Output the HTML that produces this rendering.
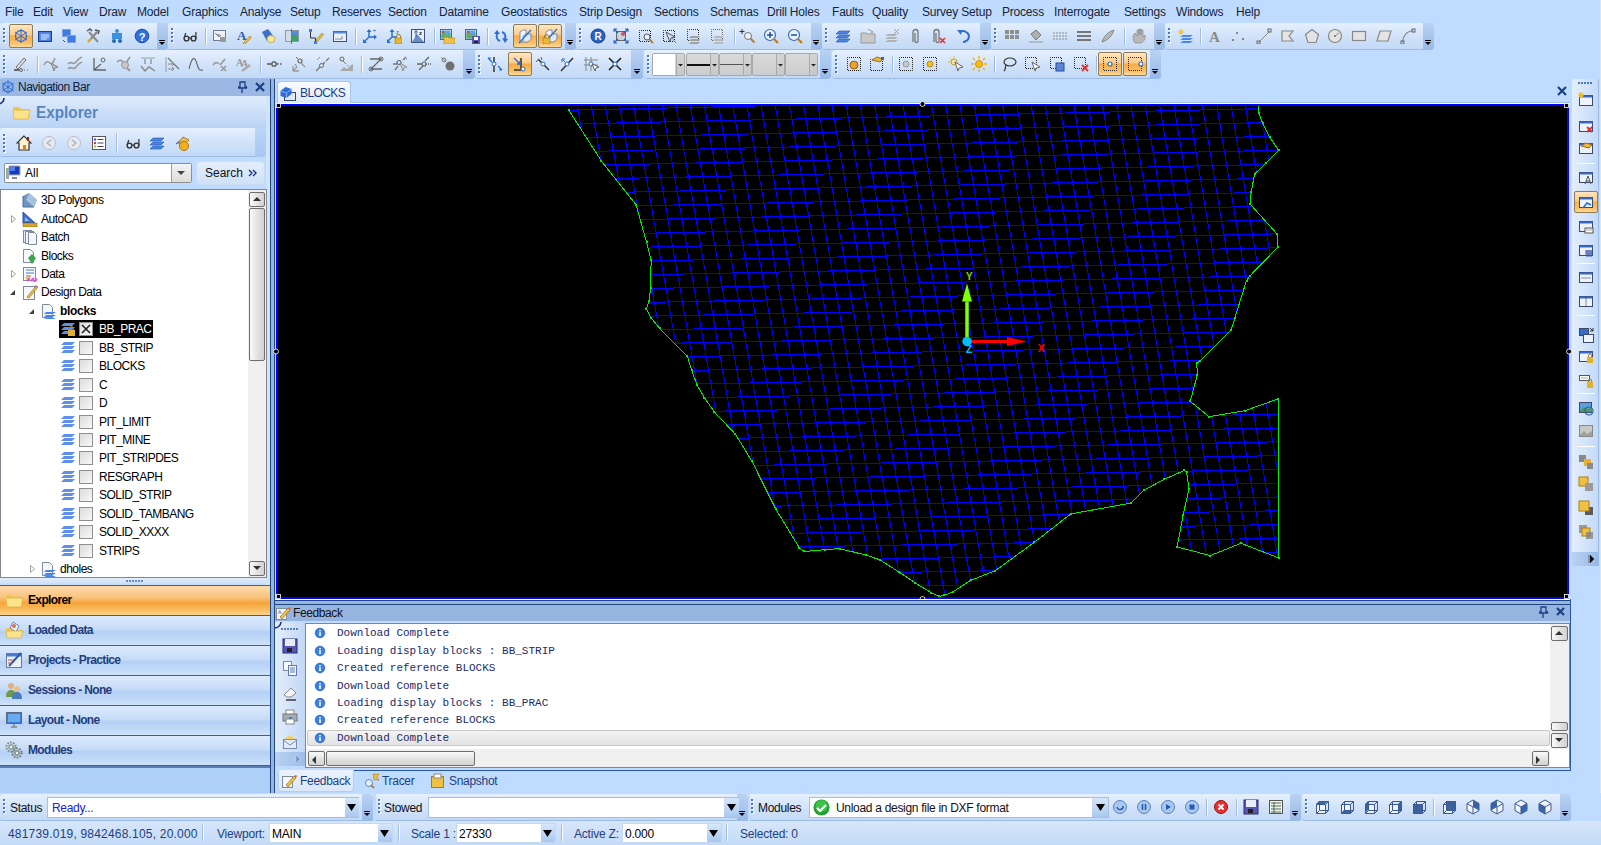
<!DOCTYPE html><html><head><meta charset="utf-8"><style>
*{box-sizing:border-box}
html,body{margin:0;padding:0}
body{width:1601px;height:845px;overflow:hidden;position:relative;background:#BFDBFF;font-family:"Liberation Sans",sans-serif;font-size:12px;color:#000}
.a{position:absolute}
.t{position:absolute;white-space:nowrap;line-height:14px}
.tb{position:absolute;background:linear-gradient(#E6F0FD,#D3E4FA 45%,#C3D9F6);border-bottom:1px solid #9BBBE5;border-radius:3px 0 0 3px}
.dd{position:absolute;background:linear-gradient(#B9D2F3,#97B9E8);border-radius:0 3px 3px 0}
.grip{position:absolute;width:3px;background:linear-gradient(90deg,transparent 1px,#fff 1px) 0 1px/3px 4px repeat-y,linear-gradient(#4A78C0 2px,transparent 2px) 0 0/2px 4px repeat-y}
.sep{position:absolute;width:1px;background:#9DBAE2;border-right:1px solid #fff}
.hsep{position:absolute;height:1px;background:#9DBAE2;border-bottom:1px solid #fff}
.act{position:absolute;border:1px solid #8E7B5A;border-radius:2px;background:linear-gradient(#FFE6C0,#FCCB86 45%,#F7AC46 50%,#FAC36F 85%,#FDDB9A)}
</style></head><body>
<div class="t" style="left:5px;top:5px;font-size:12px;color:#15243A;letter-spacing:-0.2px">File</div>
<div class="t" style="left:33px;top:5px;font-size:12px;color:#15243A;letter-spacing:-0.2px">Edit</div>
<div class="t" style="left:63px;top:5px;font-size:12px;color:#15243A;letter-spacing:-0.2px">View</div>
<div class="t" style="left:99px;top:5px;font-size:12px;color:#15243A;letter-spacing:-0.2px">Draw</div>
<div class="t" style="left:137px;top:5px;font-size:12px;color:#15243A;letter-spacing:-0.2px">Model</div>
<div class="t" style="left:182px;top:5px;font-size:12px;color:#15243A;letter-spacing:-0.2px">Graphics</div>
<div class="t" style="left:240px;top:5px;font-size:12px;color:#15243A;letter-spacing:-0.2px">Analyse</div>
<div class="t" style="left:290px;top:5px;font-size:12px;color:#15243A;letter-spacing:-0.2px">Setup</div>
<div class="t" style="left:332px;top:5px;font-size:12px;color:#15243A;letter-spacing:-0.2px">Reserves</div>
<div class="t" style="left:388px;top:5px;font-size:12px;color:#15243A;letter-spacing:-0.2px">Section</div>
<div class="t" style="left:439px;top:5px;font-size:12px;color:#15243A;letter-spacing:-0.2px">Datamine</div>
<div class="t" style="left:501px;top:5px;font-size:12px;color:#15243A;letter-spacing:-0.2px">Geostatistics</div>
<div class="t" style="left:579px;top:5px;font-size:12px;color:#15243A;letter-spacing:-0.2px">Strip Design</div>
<div class="t" style="left:654px;top:5px;font-size:12px;color:#15243A;letter-spacing:-0.2px">Sections</div>
<div class="t" style="left:710px;top:5px;font-size:12px;color:#15243A;letter-spacing:-0.2px">Schemas</div>
<div class="t" style="left:767px;top:5px;font-size:12px;color:#15243A;letter-spacing:-0.2px">Drill Holes</div>
<div class="t" style="left:832px;top:5px;font-size:12px;color:#15243A;letter-spacing:-0.2px">Faults</div>
<div class="t" style="left:872px;top:5px;font-size:12px;color:#15243A;letter-spacing:-0.2px">Quality</div>
<div class="t" style="left:922px;top:5px;font-size:12px;color:#15243A;letter-spacing:-0.2px">Survey Setup</div>
<div class="t" style="left:1002px;top:5px;font-size:12px;color:#15243A;letter-spacing:-0.2px">Process</div>
<div class="t" style="left:1054px;top:5px;font-size:12px;color:#15243A;letter-spacing:-0.2px">Interrogate</div>
<div class="t" style="left:1124px;top:5px;font-size:12px;color:#15243A;letter-spacing:-0.2px">Settings</div>
<div class="t" style="left:1176px;top:5px;font-size:12px;color:#15243A;letter-spacing:-0.2px">Windows</div>
<div class="t" style="left:1236px;top:5px;font-size:12px;color:#15243A;letter-spacing:-0.2px">Help</div>
<div class="tb" style="left:0px;top:23px;width:157px;height:27px"></div>
<div class="dd" style="left:157px;top:23px;width:11px;height:27px"></div>
<svg class="a" style="left:159px;top:40px" width="6" height="6" viewBox="0 0 6 6"><path d="M0 0.5h6" stroke="#000"/><path d="M0 2h6l-3 3z" fill="#000"/><path d="M0 3h6" stroke="#fff" stroke-opacity=".0"/></svg>
<svg class="a" style="left:3px;top:28px" width="3" height="16" viewBox="0 0 3 16"><rect x="1" y="1" width="2" height="2" fill="#fff"/><rect x="0" y="0" width="2" height="2" fill="#4A78C0"/><rect x="1" y="5" width="2" height="2" fill="#fff"/><rect x="0" y="4" width="2" height="2" fill="#4A78C0"/><rect x="1" y="9" width="2" height="2" fill="#fff"/><rect x="0" y="8" width="2" height="2" fill="#4A78C0"/><rect x="1" y="13" width="2" height="2" fill="#fff"/><rect x="0" y="12" width="2" height="2" fill="#4A78C0"/></svg>
<div class="tb" style="left:168px;top:23px;width:397px;height:27px"></div>
<div class="dd" style="left:565px;top:23px;width:11px;height:27px"></div>
<svg class="a" style="left:567px;top:40px" width="6" height="6" viewBox="0 0 6 6"><path d="M0 0.5h6" stroke="#000"/><path d="M0 2h6l-3 3z" fill="#000"/><path d="M0 3h6" stroke="#fff" stroke-opacity=".0"/></svg>
<svg class="a" style="left:171px;top:28px" width="3" height="16" viewBox="0 0 3 16"><rect x="1" y="1" width="2" height="2" fill="#fff"/><rect x="0" y="0" width="2" height="2" fill="#4A78C0"/><rect x="1" y="5" width="2" height="2" fill="#fff"/><rect x="0" y="4" width="2" height="2" fill="#4A78C0"/><rect x="1" y="9" width="2" height="2" fill="#fff"/><rect x="0" y="8" width="2" height="2" fill="#4A78C0"/><rect x="1" y="13" width="2" height="2" fill="#fff"/><rect x="0" y="12" width="2" height="2" fill="#4A78C0"/></svg>
<div class="tb" style="left:576px;top:23px;width:235px;height:27px"></div>
<div class="dd" style="left:811px;top:23px;width:11px;height:27px"></div>
<svg class="a" style="left:813px;top:40px" width="6" height="6" viewBox="0 0 6 6"><path d="M0 0.5h6" stroke="#000"/><path d="M0 2h6l-3 3z" fill="#000"/><path d="M0 3h6" stroke="#fff" stroke-opacity=".0"/></svg>
<svg class="a" style="left:579px;top:28px" width="3" height="16" viewBox="0 0 3 16"><rect x="1" y="1" width="2" height="2" fill="#fff"/><rect x="0" y="0" width="2" height="2" fill="#4A78C0"/><rect x="1" y="5" width="2" height="2" fill="#fff"/><rect x="0" y="4" width="2" height="2" fill="#4A78C0"/><rect x="1" y="9" width="2" height="2" fill="#fff"/><rect x="0" y="8" width="2" height="2" fill="#4A78C0"/><rect x="1" y="13" width="2" height="2" fill="#fff"/><rect x="0" y="12" width="2" height="2" fill="#4A78C0"/></svg>
<div class="tb" style="left:822px;top:23px;width:158px;height:27px"></div>
<div class="dd" style="left:980px;top:23px;width:11px;height:27px"></div>
<svg class="a" style="left:982px;top:40px" width="6" height="6" viewBox="0 0 6 6"><path d="M0 0.5h6" stroke="#000"/><path d="M0 2h6l-3 3z" fill="#000"/><path d="M0 3h6" stroke="#fff" stroke-opacity=".0"/></svg>
<svg class="a" style="left:825px;top:28px" width="3" height="16" viewBox="0 0 3 16"><rect x="1" y="1" width="2" height="2" fill="#fff"/><rect x="0" y="0" width="2" height="2" fill="#4A78C0"/><rect x="1" y="5" width="2" height="2" fill="#fff"/><rect x="0" y="4" width="2" height="2" fill="#4A78C0"/><rect x="1" y="9" width="2" height="2" fill="#fff"/><rect x="0" y="8" width="2" height="2" fill="#4A78C0"/><rect x="1" y="13" width="2" height="2" fill="#fff"/><rect x="0" y="12" width="2" height="2" fill="#4A78C0"/></svg>
<div class="tb" style="left:991px;top:23px;width:163px;height:27px"></div>
<div class="dd" style="left:1154px;top:23px;width:11px;height:27px"></div>
<svg class="a" style="left:1156px;top:40px" width="6" height="6" viewBox="0 0 6 6"><path d="M0 0.5h6" stroke="#000"/><path d="M0 2h6l-3 3z" fill="#000"/><path d="M0 3h6" stroke="#fff" stroke-opacity=".0"/></svg>
<svg class="a" style="left:994px;top:28px" width="3" height="16" viewBox="0 0 3 16"><rect x="1" y="1" width="2" height="2" fill="#fff"/><rect x="0" y="0" width="2" height="2" fill="#4A78C0"/><rect x="1" y="5" width="2" height="2" fill="#fff"/><rect x="0" y="4" width="2" height="2" fill="#4A78C0"/><rect x="1" y="9" width="2" height="2" fill="#fff"/><rect x="0" y="8" width="2" height="2" fill="#4A78C0"/><rect x="1" y="13" width="2" height="2" fill="#fff"/><rect x="0" y="12" width="2" height="2" fill="#4A78C0"/></svg>
<div class="tb" style="left:1165px;top:23px;width:258px;height:27px"></div>
<div class="dd" style="left:1423px;top:23px;width:11px;height:27px"></div>
<svg class="a" style="left:1425px;top:40px" width="6" height="6" viewBox="0 0 6 6"><path d="M0 0.5h6" stroke="#000"/><path d="M0 2h6l-3 3z" fill="#000"/><path d="M0 3h6" stroke="#fff" stroke-opacity=".0"/></svg>
<svg class="a" style="left:1168px;top:28px" width="3" height="16" viewBox="0 0 3 16"><rect x="1" y="1" width="2" height="2" fill="#fff"/><rect x="0" y="0" width="2" height="2" fill="#4A78C0"/><rect x="1" y="5" width="2" height="2" fill="#fff"/><rect x="0" y="4" width="2" height="2" fill="#4A78C0"/><rect x="1" y="9" width="2" height="2" fill="#fff"/><rect x="0" y="8" width="2" height="2" fill="#4A78C0"/><rect x="1" y="13" width="2" height="2" fill="#fff"/><rect x="0" y="12" width="2" height="2" fill="#4A78C0"/></svg>
<div class="act" style="left:9px;top:24px;width:24px;height:24px"></div>
<svg class="a" style="left:13px;top:28px" width="16" height="16" viewBox="0 0 16 16"><circle cx="8" cy="8" r="5.5" fill="none" stroke="#2F6FD8" stroke-width="1.3"/><path d="M8 1v14M2 4l12 8M2 12l12-8" stroke="#2F6FD8" stroke-width="1"/></svg>
<svg class="a" style="left:37px;top:28px" width="16" height="16" viewBox="0 0 16 16"><rect x="1.5" y="3.5" width="13" height="10" fill="#3D6FD6" stroke="#1C3F86"/><rect x="2.5" y="4.5" width="11" height="8" fill="#5A8BE8"/><path d="M4 7h8M4 9h8M4 11h6" stroke="#DDE8FF"/></svg>
<svg class="a" style="left:61px;top:28px" width="16" height="16" viewBox="0 0 16 16"><rect x="1.5" y="1.5" width="8" height="7" fill="#3F7BE0" stroke="#7FA3D6"/><rect x="6.5" y="7.5" width="8" height="7" fill="#3F7BE0" stroke="#7FA3D6"/><path d="M2 12l2 2" stroke="#1C4EA8"/></svg>
<svg class="a" style="left:85px;top:28px" width="16" height="16" viewBox="0 0 16 16"><path d="M3 14L12 4M13 14L4 4" stroke="#8A8A8A" stroke-width="2"/><path d="M2 3l3-2 2 2M10 2l4 1-1 3" stroke="#555" stroke-width="1.5" fill="none"/><path d="M3 14l3-3" stroke="#E3B020" stroke-width="2"/></svg>
<svg class="a" style="left:109px;top:28px" width="16" height="16" viewBox="0 0 16 16"><circle cx="8" cy="3" r="2" fill="#3A8FE0"/><rect x="3" y="5" width="10" height="6" fill="#3A8FE0"/><circle cx="5" cy="13" r="2" fill="#2766B6"/><circle cx="11" cy="13" r="2" fill="#2766B6"/></svg>
<svg class="a" style="left:134px;top:28px" width="16" height="16" viewBox="0 0 16 16"><circle cx="8" cy="8" r="6.8" fill="#2F6FE0" stroke="#1B4AA5"/><text x="8" y="12.5" font-size="11" font-weight="bold" text-anchor="middle" fill="#fff" font-family="Liberation Sans">?</text></svg>
<svg class="a" style="left:182px;top:28px" width="16" height="16" viewBox="0 0 16 16"><circle cx="4.5" cy="10.5" r="2.4" fill="none" stroke="#333" stroke-width="1.4"/><circle cx="11.5" cy="10.5" r="2.4" fill="none" stroke="#333" stroke-width="1.4"/><path d="M7 10h2M2.2 10l1.5-5M13.9 10.5V4" stroke="#333" stroke-width="1.2"/></svg>
<svg class="a" style="left:212px;top:28px" width="16" height="16" viewBox="0 0 16 16"><rect x="1.5" y="2.5" width="12" height="10" fill="#EEF2F8" stroke="#6E7C92"/><path d="M3 5l4 4 2-2" stroke="#888" fill="#999"/><rect x="8" y="9" width="6" height="5" fill="#999"/></svg>
<svg class="a" style="left:236px;top:28px" width="16" height="16" viewBox="0 0 16 16"><text x="1" y="12" font-size="13" font-weight="bold" fill="#3557A8" font-family="Liberation Serif">A</text><path d="M7 15l7-7 1.5 1.5-7 7z" fill="#F2C230" stroke="#9A6B10" stroke-width=".6"/></svg>
<svg class="a" style="left:260px;top:28px" width="16" height="16" viewBox="0 0 16 16"><path d="M2 4l6-3 6 8-7 4z" fill="#3E6EC8"/><ellipse cx="11" cy="11" rx="4" ry="3.5" fill="#F5E9A0" stroke="#C9B050"/></svg>
<svg class="a" style="left:284px;top:28px" width="16" height="16" viewBox="0 0 16 16"><rect x="1.5" y="2.5" width="13" height="11" fill="#D5DBE3" stroke="#8E98A6"/><rect x="8" y="3" width="6" height="10" fill="#3E9E6A"/><rect x="8" y="3" width="6" height="4" fill="#4E8FD8"/><path d="M7.5 1v15" stroke="#111" stroke-dasharray="1 1" stroke-dashoffset="0.5"/></svg>
<svg class="a" style="left:308px;top:28px" width="16" height="16" viewBox="0 0 16 16"><path d="M2.5 2v8h5v5" stroke="#333" fill="none"/><rect x="1" y="1" width="3" height="3" fill="#3A80E0"/><rect x="6" y="13" width="3" height="3" fill="#3A80E0"/><path d="M8 12l6-7 1.5 1.5-6 7z" fill="#F2C230" stroke="#9A6B10" stroke-width=".6"/></svg>
<svg class="a" style="left:332px;top:28px" width="16" height="16" viewBox="0 0 16 16"><rect x="1.5" y="3.5" width="13" height="10" fill="#E9EFF8" stroke="#3B527A"/><rect x="1.5" y="3.5" width="13" height="2" fill="#5C8ADB"/><path d="M3 11h7v-3" stroke="#333" stroke-dasharray="1 1" stroke-dashoffset="0.5" fill="none"/></svg>
<svg class="a" style="left:362px;top:28px" width="16" height="16" viewBox="0 0 16 16"><path d="M7 9V3M7 9h6M7 9l-5 5" stroke="#2A6CC8" stroke-width="1.4" fill="none"/><path d="M4.5 4L7 1l2.5 3zM12 6.5l3 2.5-3 2.5zM1 11v4h4z" fill="#2A6CC8"/><path d="M11 3a2 2 0 013 0" stroke="#2A6CC8" fill="none"/></svg>
<svg class="a" style="left:386px;top:28px" width="16" height="16" viewBox="0 0 16 16"><path d="M6 9V3M6 9h5M6 9l-4 4" stroke="#2A6CC8" stroke-width="1.4" fill="none"/><path d="M3.5 4L6 1l2.5 3zM1 11v4h4z" fill="#2A6CC8"/><text x="10" y="6" font-size="6" fill="#2A6CC8" font-family="Liberation Sans">z</text><rect x="9" y="10" width="7" height="6" fill="#E8B830" stroke="#A07810" stroke-width=".6"/><path d="M10.5 10V8.5a2 2 0 014 0V10" stroke="#A07810" fill="none"/></svg>
<svg class="a" style="left:410px;top:28px" width="16" height="16" viewBox="0 0 16 16"><rect x="1.5" y="1.5" width="13" height="13" fill="#E9EFF8" stroke="#3B527A"/><path d="M2 14L7 6l7 8z" fill="#6C8CC8"/><path d="M6 9V3M4.5 4.5L6 2.5l1.5 2" stroke="#2A5AB0" fill="none"/><text x="9" y="7" font-size="6" font-weight="bold" fill="#223" font-family="Liberation Sans">z</text></svg>
<svg class="a" style="left:439px;top:28px" width="16" height="16" viewBox="0 0 16 16"><rect x="1.5" y="1.5" width="11" height="10" fill="#E8F0FA" stroke="#3C6D9A"/><rect x="2.5" y="2.5" width="9" height="8" fill="#5AA7E8"/><path d="M2.5 6l3-2 2 4 4-3v5.5h-9z" fill="#5FAE5A"/><circle cx="4" cy="4" r="1.2" fill="#E04040"/><path d="M5 9h4l1 1h6v6H5z" fill="#F2C04A" stroke="#B88A20" stroke-width=".7"/></svg>
<svg class="a" style="left:464px;top:28px" width="16" height="16" viewBox="0 0 16 16"><rect x="1.5" y="1.5" width="11" height="10" fill="#E8F0FA" stroke="#3C6D9A"/><rect x="2.5" y="2.5" width="9" height="8" fill="#5AA7E8"/><path d="M2.5 6l3-2 2 4 4-3v5.5h-9z" fill="#5FAE5A"/><circle cx="4" cy="4" r="1.2" fill="#E04040"/><rect x="8" y="8" width="8" height="8" fill="#5856B0"/><rect x="10" y="9" width="4" height="3" fill="#fff"/><rect x="10" y="13" width="4" height="2" fill="#222"/></svg>
<svg class="a" style="left:493px;top:28px" width="16" height="16" viewBox="0 0 16 16"><path d="M7 13c-3-1-4-4-3-7" stroke="#2E6CD0" stroke-width="2" fill="none"/><path d="M1 6l3-4 3 4z" fill="#2E6CD0"/><path d="M9 4c3 1 4 4 3 7" stroke="#2E6CD0" stroke-width="2" fill="none"/><path d="M9 10l3 5 3-4z" fill="#2E6CD0"/></svg>
<div class="act" style="left:513px;top:24px;width:24px;height:24px"></div>
<svg class="a" style="left:517px;top:28px" width="16" height="16" viewBox="0 0 16 16"><path d="M3 4l3-2h3v9l-3 3H3z" fill="#F4F8FF" stroke="#5A7AB0" stroke-width=".8"/><path d="M6 8l3-2h5v5l-3 3H6z" fill="#DDE8F8" stroke="#5A7AB0" stroke-width=".8"/><path d="M2 15L14 2" stroke="#2E6CD0" stroke-width="1.2"/></svg>
<div class="act" style="left:538px;top:24px;width:24px;height:24px"></div>
<svg class="a" style="left:542px;top:28px" width="16" height="16" viewBox="0 0 16 16"><path d="M4 4l3-2h3v9l-3 3H4z" fill="#F4F8FF" stroke="#5A7AB0" stroke-width=".8"/><path d="M7 8l3-2h5v5l-3 3H7z" fill="#DDE8F8" stroke="#5A7AB0" stroke-width=".8"/><path d="M5 12L15 1" stroke="#2E6CD0" stroke-width="1.2"/><rect x="1" y="10" width="7" height="6" fill="#E8B830" stroke="#A07810" stroke-width=".6"/><path d="M2.5 10V8.5a2 2 0 014 0V10" stroke="#A07810" fill="none"/></svg>
<svg class="a" style="left:590px;top:28px" width="16" height="16" viewBox="0 0 16 16"><circle cx="8" cy="8" r="7" fill="#2A63C8" stroke="#173E86"/><text x="8" y="12" font-size="10" font-weight="bold" text-anchor="middle" fill="#fff" font-family="Liberation Sans">R</text></svg>
<svg class="a" style="left:613px;top:28px" width="16" height="16" viewBox="0 0 16 16"><rect x="3.5" y="3.5" width="9" height="9" fill="#C8D4E4" stroke="#666"/><path d="M1 1l4 4M15 1l-4 4M1 15l4-4M15 15l-4-4" stroke="#2A5CB8" stroke-width="1.3"/><path d="M1 1h3M1 1v3M15 1h-3M15 1v3M1 15h3M1 15v-3M15 15h-3M15 15v-3" stroke="#2A5CB8"/><circle cx="10" cy="6" r="2" fill="#E05050"/></svg>
<svg class="a" style="left:638px;top:28px" width="16" height="16" viewBox="0 0 16 16"><rect x="1.5" y="2.5" width="11" height="11" fill="none" stroke="#222" stroke-dasharray="1 1" stroke-dashoffset="0.5"/><circle cx="9" cy="9" r="3" fill="#EAF2FA" stroke="#555"/><path d="M11 11l4 4" stroke="#C08020" stroke-width="2"/></svg>
<svg class="a" style="left:662px;top:28px" width="16" height="16" viewBox="0 0 16 16"><rect x="1.5" y="2.5" width="11" height="11" fill="none" stroke="#222" stroke-dasharray="1 1" stroke-dashoffset="0.5"/><path d="M4 4l4 10 1-4 4-1z" fill="none" stroke="#555"/><path d="M9 9l5 6" stroke="#888"/></svg>
<svg class="a" style="left:686px;top:28px" width="16" height="16" viewBox="0 0 16 16"><rect x="1.5" y="1.5" width="11" height="11" fill="none" stroke="#333" stroke-dasharray="1 1" stroke-dashoffset="0.5"/><path d="M5 8h9l-2 2H3zM5 11h9l-2 2H3zM5 14h9l-2 2H3z" fill="#A0A0A0"/></svg>
<svg class="a" style="left:710px;top:28px" width="16" height="16" viewBox="0 0 16 16"><rect x="1.5" y="1.5" width="11" height="11" fill="none" stroke="#666" stroke-dasharray="1 1" stroke-dashoffset="0.5"/><path d="M5 8h9l-2 2H3zM5 11h9l-2 2H3zM5 14h9l-2 2H3z" fill="#B8B8B8"/></svg>
<svg class="a" style="left:739px;top:28px" width="16" height="16" viewBox="0 0 16 16"><path d="M3 1v5M0.5 3.5h5" stroke="#333"/><circle cx="9" cy="8" r="3.5" fill="#EAF2FA" stroke="#777"/><path d="M11.5 10.5l4 4" stroke="#C08020" stroke-width="2.2"/></svg>
<svg class="a" style="left:763px;top:28px" width="16" height="16" viewBox="0 0 16 16"><circle cx="7" cy="7" r="5.5" fill="#EAF4FF" stroke="#3A6AB8" stroke-width="1.2"/><path d="M7 4v6M4 7h6" stroke="#1F4D9E" stroke-width="1.5"/><path d="M11 11l4 4" stroke="#C08020" stroke-width="2.4"/></svg>
<svg class="a" style="left:787px;top:28px" width="16" height="16" viewBox="0 0 16 16"><circle cx="7" cy="7" r="5.5" fill="#EAF4FF" stroke="#3A6AB8" stroke-width="1.2"/><path d="M4 7h6" stroke="#1F4D9E" stroke-width="1.5"/><path d="M11 11l4 4" stroke="#C08020" stroke-width="2.4"/></svg>
<svg class="a" style="left:835px;top:28px" width="16" height="16" viewBox="0 0 16 16"><path d="M4 3h11l-3 3H1zM4 7h11l-3 3H1zM4 11h11l-3 3H1z" fill="#4A86E8" stroke="#2650A0" stroke-width=".6"/></svg>
<svg class="a" style="left:860px;top:28px" width="16" height="16" viewBox="0 0 16 16"><path d="M1 5h5l1 1h8v9H1z" fill="#C8C8C8" stroke="#9A9A9A"/><path d="M8 1l5 3-2 1" stroke="#999" fill="none"/></svg>
<svg class="a" style="left:884px;top:28px" width="16" height="16" viewBox="0 0 16 16"><path d="M4 6h10l-3 2H1zM4 9h10l-3 2H1zM4 12h10l-3 2H1z" fill="#B0B0B0"/><path d="M10 1l5 5M15 1l-5 5" stroke="#A0A0A0"/></svg>
<svg class="a" style="left:907px;top:28px" width="16" height="16" viewBox="0 0 16 16"><path d="M6 14V4a2.5 2.5 0 015 0v9a1.5 1.5 0 01-3 0V5" stroke="#777" stroke-width="1.3" fill="none"/></svg>
<svg class="a" style="left:930px;top:28px" width="16" height="16" viewBox="0 0 16 16"><path d="M4 14V4a2.5 2.5 0 015 0v9a1.5 1.5 0 01-3 0V5" stroke="#777" stroke-width="1.3" fill="none"/><path d="M10 10l5 5M15 10l-5 5" stroke="#E03030" stroke-width="1.6"/></svg>
<svg class="a" style="left:956px;top:28px" width="16" height="16" viewBox="0 0 16 16"><path d="M4 4a6 6 0 019 4 6 6 0 01-6 6" stroke="#2E6CD0" stroke-width="2" fill="none"/><path d="M1 2l4 5 1-5z" fill="#2E6CD0"/></svg>
<svg class="a" style="left:1004px;top:28px" width="16" height="16" viewBox="0 0 16 16"><path d="M1 2h4v4H1zM6 2h4v4H6zM11 2h4v4h-4zM1 7h4v4H1zM6 7h4v4H6zM11 7h4v4h-4z" fill="#8E8E8E"/></svg>
<svg class="a" style="left:1028px;top:28px" width="16" height="16" viewBox="0 0 16 16"><path d="M3 6l5-4 5 5-5 5z" fill="#B0B0B0" stroke="#777"/><path d="M1 14h14" stroke="#999" stroke-width="2" stroke-dasharray="1 1" stroke-dashoffset="0.5"/></svg>
<svg class="a" style="left:1052px;top:28px" width="16" height="16" viewBox="0 0 16 16"><path d="M1 5h14M1 8h14M1 11h14" stroke="#888" stroke-dasharray="2 1"/></svg>
<svg class="a" style="left:1076px;top:28px" width="16" height="16" viewBox="0 0 16 16"><path d="M1 4h14M1 8h14M1 12h14" stroke="#777" stroke-width="2"/></svg>
<svg class="a" style="left:1100px;top:28px" width="16" height="16" viewBox="0 0 16 16"><path d="M2 14c2-6 6-10 12-12-2 6-6 10-12 12z" fill="#B8B8B8" stroke="#888"/></svg>
<svg class="a" style="left:1131px;top:28px" width="16" height="16" viewBox="0 0 16 16"><path d="M4 15c-3-4-2-8 0-10l2 3V2h2v5V1h2v6V2h2v7l2-2c1 3-1 7-4 8z" fill="#B8B8B8" stroke="#8A8A8A" stroke-width=".7"/></svg>
<svg class="a" style="left:1178px;top:28px" width="16" height="16" viewBox="0 0 16 16"><path d="M5 7h10l-3 2H2zM5 10h10l-3 2H2zM5 13h10l-3 2H2z" fill="#4A86E8"/><path d="M3 1v6M0 4h6M1 2l4 4M5 2l-4 4" stroke="#F2C020"/></svg>
<svg class="a" style="left:1207px;top:28px" width="16" height="16" viewBox="0 0 16 16"><text x="2" y="14" font-size="15" font-weight="bold" fill="#8A8A8A" font-family="Liberation Serif">A</text></svg>
<svg class="a" style="left:1230px;top:28px" width="16" height="16" viewBox="0 0 16 16"><rect x="6" y="4" width="2" height="2" fill="#888"/><rect x="2" y="11" width="2" height="2" fill="#888"/><rect x="12" y="10" width="2" height="2" fill="#888"/></svg>
<svg class="a" style="left:1256px;top:28px" width="16" height="16" viewBox="0 0 16 16"><path d="M2.5 14.5l11-11" stroke="#888"/><rect x="1" y="13" width="3" height="3" fill="none" stroke="#666"/><rect x="12" y="1" width="3" height="3" fill="none" stroke="#666"/></svg>
<svg class="a" style="left:1280px;top:28px" width="16" height="16" viewBox="0 0 16 16"><path d="M2 3h11l-4 5 4 5H2z" fill="#E4E4E4" stroke="#888" stroke-width="1.2"/></svg>
<svg class="a" style="left:1304px;top:28px" width="16" height="16" viewBox="0 0 16 16"><path d="M8 1.5l6.5 5-2.5 8h-8l-2.5-8z" fill="#E4E4E4" stroke="#888" stroke-width="1.2"/></svg>
<svg class="a" style="left:1327px;top:28px" width="16" height="16" viewBox="0 0 16 16"><circle cx="8" cy="8" r="6.5" fill="#E4E4E4" stroke="#888" stroke-width="1.2"/><circle cx="8" cy="8" r="1" fill="#666"/><path d="M8 8l4-3" stroke="#888"/></svg>
<svg class="a" style="left:1351px;top:28px" width="16" height="16" viewBox="0 0 16 16"><rect x="1.5" y="3.5" width="13" height="9" fill="#E4E4E4" stroke="#888" stroke-width="1.2"/></svg>
<svg class="a" style="left:1376px;top:28px" width="16" height="16" viewBox="0 0 16 16"><path d="M4 3h11l-3 10H1z" fill="#E4E4E4" stroke="#888" stroke-width="1.2"/></svg>
<svg class="a" style="left:1400px;top:28px" width="16" height="16" viewBox="0 0 16 16"><path d="M2.5 14C3 8 7 3 13 2.5" stroke="#888" stroke-width="1.2" fill="none"/><rect x="1" y="13" width="3" height="3" fill="none" stroke="#666"/><rect x="12" y="1" width="3" height="3" fill="none" stroke="#666"/></svg>
<div class="sep" style="left:205px;top:28px;width:2px;height:17px"></div>
<div class="sep" style="left:355px;top:28px;width:2px;height:17px"></div>
<div class="sep" style="left:434px;top:28px;width:2px;height:17px"></div>
<div class="sep" style="left:487px;top:28px;width:2px;height:17px"></div>
<div class="sep" style="left:734px;top:28px;width:2px;height:17px"></div>
<div class="sep" style="left:1124px;top:28px;width:2px;height:17px"></div>
<div class="sep" style="left:1200px;top:28px;width:2px;height:17px"></div>
<div class="tb" style="left:0px;top:50px;width:463px;height:29px"></div>
<div class="dd" style="left:463px;top:50px;width:12px;height:29px"></div>
<svg class="a" style="left:466px;top:69px" width="6" height="6" viewBox="0 0 6 6"><path d="M0 0.5h6" stroke="#000"/><path d="M0 2h6l-3 3z" fill="#000"/><path d="M0 3h6" stroke="#fff" stroke-opacity=".0"/></svg>
<svg class="a" style="left:3px;top:55px" width="3" height="20" viewBox="0 0 3 20"><rect x="1" y="1" width="2" height="2" fill="#fff"/><rect x="0" y="0" width="2" height="2" fill="#4A78C0"/><rect x="1" y="5" width="2" height="2" fill="#fff"/><rect x="0" y="4" width="2" height="2" fill="#4A78C0"/><rect x="1" y="9" width="2" height="2" fill="#fff"/><rect x="0" y="8" width="2" height="2" fill="#4A78C0"/><rect x="1" y="13" width="2" height="2" fill="#fff"/><rect x="0" y="12" width="2" height="2" fill="#4A78C0"/><rect x="1" y="17" width="2" height="2" fill="#fff"/><rect x="0" y="16" width="2" height="2" fill="#4A78C0"/></svg>
<div class="tb" style="left:475px;top:50px;width:156px;height:29px"></div>
<div class="dd" style="left:631px;top:50px;width:12px;height:29px"></div>
<svg class="a" style="left:634px;top:69px" width="6" height="6" viewBox="0 0 6 6"><path d="M0 0.5h6" stroke="#000"/><path d="M0 2h6l-3 3z" fill="#000"/><path d="M0 3h6" stroke="#fff" stroke-opacity=".0"/></svg>
<svg class="a" style="left:478px;top:55px" width="3" height="20" viewBox="0 0 3 20"><rect x="1" y="1" width="2" height="2" fill="#fff"/><rect x="0" y="0" width="2" height="2" fill="#4A78C0"/><rect x="1" y="5" width="2" height="2" fill="#fff"/><rect x="0" y="4" width="2" height="2" fill="#4A78C0"/><rect x="1" y="9" width="2" height="2" fill="#fff"/><rect x="0" y="8" width="2" height="2" fill="#4A78C0"/><rect x="1" y="13" width="2" height="2" fill="#fff"/><rect x="0" y="12" width="2" height="2" fill="#4A78C0"/><rect x="1" y="17" width="2" height="2" fill="#fff"/><rect x="0" y="16" width="2" height="2" fill="#4A78C0"/></svg>
<div class="tb" style="left:644px;top:50px;width:176px;height:29px"></div>
<div class="dd" style="left:820px;top:50px;width:11px;height:29px"></div>
<svg class="a" style="left:822px;top:69px" width="6" height="6" viewBox="0 0 6 6"><path d="M0 0.5h6" stroke="#000"/><path d="M0 2h6l-3 3z" fill="#000"/><path d="M0 3h6" stroke="#fff" stroke-opacity=".0"/></svg>
<svg class="a" style="left:647px;top:55px" width="3" height="20" viewBox="0 0 3 20"><rect x="1" y="1" width="2" height="2" fill="#fff"/><rect x="0" y="0" width="2" height="2" fill="#4A78C0"/><rect x="1" y="5" width="2" height="2" fill="#fff"/><rect x="0" y="4" width="2" height="2" fill="#4A78C0"/><rect x="1" y="9" width="2" height="2" fill="#fff"/><rect x="0" y="8" width="2" height="2" fill="#4A78C0"/><rect x="1" y="13" width="2" height="2" fill="#fff"/><rect x="0" y="12" width="2" height="2" fill="#4A78C0"/><rect x="1" y="17" width="2" height="2" fill="#fff"/><rect x="0" y="16" width="2" height="2" fill="#4A78C0"/></svg>
<div class="tb" style="left:832px;top:50px;width:318px;height:29px"></div>
<div class="dd" style="left:1150px;top:50px;width:11px;height:29px"></div>
<svg class="a" style="left:1152px;top:69px" width="6" height="6" viewBox="0 0 6 6"><path d="M0 0.5h6" stroke="#000"/><path d="M0 2h6l-3 3z" fill="#000"/><path d="M0 3h6" stroke="#fff" stroke-opacity=".0"/></svg>
<svg class="a" style="left:835px;top:55px" width="3" height="20" viewBox="0 0 3 20"><rect x="1" y="1" width="2" height="2" fill="#fff"/><rect x="0" y="0" width="2" height="2" fill="#4A78C0"/><rect x="1" y="5" width="2" height="2" fill="#fff"/><rect x="0" y="4" width="2" height="2" fill="#4A78C0"/><rect x="1" y="9" width="2" height="2" fill="#fff"/><rect x="0" y="8" width="2" height="2" fill="#4A78C0"/><rect x="1" y="13" width="2" height="2" fill="#fff"/><rect x="0" y="12" width="2" height="2" fill="#4A78C0"/><rect x="1" y="17" width="2" height="2" fill="#fff"/><rect x="0" y="16" width="2" height="2" fill="#4A78C0"/></svg>
<svg class="a" style="left:13px;top:56px" width="16" height="16" viewBox="0 0 16 16"><path d="M3 11l8-9 2 2-8 9z" fill="#D8D8D8" stroke="#777"/><path d="M1 14h5" stroke="#666" stroke-width="2"/><circle cx="8" cy="14" r="1.5" fill="none" stroke="#666"/><path d="M11 14h1M14 14h1" stroke="#666"/></svg>
<svg class="a" style="left:43px;top:56px" width="16" height="16" viewBox="0 0 16 16"><path d="M1 9c2-4 4-4 6-2s3 0 5-5" stroke="#999" stroke-width="1.6" fill="none"/><path d="M8 7l3 8 1-3 3-1z" fill="#BBB" stroke="#888"/></svg>
<svg class="a" style="left:67px;top:56px" width="16" height="16" viewBox="0 0 16 16"><path d="M1 8c3-4 5 2 8-2s4-4 6-5M1 13c3-4 5 2 8-2s4-4 6-5" stroke="#999" stroke-width="1.6" fill="none"/></svg>
<svg class="a" style="left:92px;top:56px" width="16" height="16" viewBox="0 0 16 16"><path d="M2 2v12h12M2 14l7-6" stroke="#666" stroke-width="1.3" fill="none"/><circle cx="11" cy="4" r="2" fill="none" stroke="#666"/></svg>
<svg class="a" style="left:116px;top:56px" width="16" height="16" viewBox="0 0 16 16"><path d="M1 6c3-3 5-2 6 1M14 1l-4 6" stroke="#999" stroke-width="1.6" fill="none"/><circle cx="9" cy="9" r="3.5" fill="#C8C8C8" stroke="#999"/><path d="M11 12l3 3" stroke="#999" stroke-width="2"/></svg>
<svg class="a" style="left:140px;top:56px" width="16" height="16" viewBox="0 0 16 16"><path d="M1 2h14" stroke="#555" stroke-dasharray="1 1" stroke-dashoffset="0.5"/><path d="M1 10l4 5 4-4 6 4" stroke="#888" stroke-width="1.4" fill="none"/><path d="M5 3v5M11 3v5" stroke="#777"/></svg>
<svg class="a" style="left:164px;top:56px" width="16" height="16" viewBox="0 0 16 16"><path d="M2 1v15" stroke="#555" stroke-dasharray="1 1" stroke-dashoffset="0.5"/><path d="M4 2l11 11" stroke="#777" stroke-width="1.3"/><path d="M4 8h6M4 13h6M8 6l2 2-2 2M8 11l2 2-2 2" stroke="#888" fill="none"/></svg>
<svg class="a" style="left:188px;top:56px" width="16" height="16" viewBox="0 0 16 16"><path d="M1 13C4 0 7 0 9 8s4 6 6 6" stroke="#666" stroke-width="1.1" fill="none"/></svg>
<svg class="a" style="left:212px;top:56px" width="16" height="16" viewBox="0 0 16 16"><path d="M1 9c2-3 4-3 6-1M13 3l-5 6M9 10l5 5M14 10l-5 5" stroke="#999" stroke-width="1.6" fill="none"/></svg>
<svg class="a" style="left:236px;top:56px" width="16" height="16" viewBox="0 0 16 16"><text x="0" y="10" font-size="10" font-weight="bold" fill="#999" font-family="Liberation Serif">A</text><text x="5" y="11" font-size="10" font-weight="bold" fill="#999" font-family="Liberation Serif">A</text><path d="M6 15l8-6" stroke="#AAA" stroke-width="2.5"/></svg>
<svg class="a" style="left:266px;top:56px" width="16" height="16" viewBox="0 0 16 16"><path d="M1 8h4M11 8h1.5M14 8h1.5" stroke="#555" stroke-width="1.5"/><circle cx="8" cy="8" r="2.2" fill="none" stroke="#555" stroke-width="1.3"/></svg>
<svg class="a" style="left:290px;top:56px" width="16" height="16" viewBox="0 0 16 16"><path d="M3 15l4-4M3 15V10M3 15h6M7 11l-2-3M11 7l4 4" stroke="#999" stroke-width="1.3" fill="none"/><circle cx="10" cy="5" r="2" fill="none" stroke="#666" stroke-width="1.2"/><path d="M8 3L6 1" stroke="#666"/></svg>
<svg class="a" style="left:314px;top:56px" width="16" height="16" viewBox="0 0 16 16"><path d="M2 15l4-4M9 8l2-2M12 5l3-3" stroke="#777" stroke-width="1.3"/><circle cx="7.5" cy="9.5" r="2" fill="none" stroke="#666"/><path d="M3 4l3-3" stroke="#999"/></svg>
<svg class="a" style="left:338px;top:56px" width="16" height="16" viewBox="0 0 16 16"><path d="M2 15l4-4 3 2 3-3 3-2v7z" fill="#A8A8A8"/><circle cx="4" cy="3" r="2" fill="none" stroke="#666"/><path d="M5 5l3 3M9 9l1 1" stroke="#777"/></svg>
<svg class="a" style="left:368px;top:56px" width="16" height="16" viewBox="0 0 16 16"><path d="M2 3h11L3 13h11" stroke="#666" stroke-width="1.3" fill="none"/><circle cx="13" cy="3" r="2" fill="none" stroke="#666"/><circle cx="3" cy="13" r="2" fill="none" stroke="#666"/></svg>
<svg class="a" style="left:392px;top:56px" width="16" height="16" viewBox="0 0 16 16"><path d="M1 8h4M11 4l3-3M3 14l3-4" stroke="#777" stroke-width="1.3"/><circle cx="7" cy="6.5" r="2" fill="none" stroke="#666" stroke-width="1.2"/><path d="M8 7l3 8 1-3 3-1z" fill="#C8C8C8" stroke="#888" stroke-width=".8"/><path d="M12 3h1M14 3h1" stroke="#777"/></svg>
<svg class="a" style="left:416px;top:56px" width="16" height="16" viewBox="0 0 16 16"><path d="M1 8h5M10 8h1M12 8h1M14 8h1M9 5l4-4M3 14l4-4" stroke="#666" stroke-width="1.3"/><circle cx="8" cy="8" r="2" fill="none" stroke="#666" stroke-width="1.2"/></svg>
<svg class="a" style="left:440px;top:56px" width="16" height="16" viewBox="0 0 16 16"><circle cx="10" cy="10" r="4.5" fill="#707070"/><path d="M1 1l5 5" stroke="#888"/><circle cx="4" cy="4" r="2" fill="none" stroke="#777"/></svg>
<svg class="a" style="left:487px;top:56px" width="16" height="16" viewBox="0 0 16 16"><path d="M7 1v15" stroke="#333" stroke-width="1.5"/><circle cx="7" cy="8" r="2" fill="#fff" stroke="#2A6CC8"/><path d="M1 2l4 4M15 14l-4-4M1 2h3M15 14h-3" stroke="#2A6CC8" stroke-width="1.2"/></svg>
<div class="act" style="left:508px;top:52px;width:24px;height:24px"></div>
<svg class="a" style="left:512px;top:56px" width="16" height="16" viewBox="0 0 16 16"><path d="M9 2v12H2" stroke="#333" stroke-width="1.5" fill="none"/><circle cx="11" cy="13" r="2" fill="#fff" stroke="#2A6CC8"/><path d="M2 2l6 6M5 8h3V5" stroke="#2A6CC8" stroke-width="1.3" fill="none"/></svg>
<svg class="a" style="left:535px;top:56px" width="16" height="16" viewBox="0 0 16 16"><path d="M3 3l11 11" stroke="#333" stroke-width="1.5"/><circle cx="8" cy="8" r="2" fill="#fff" stroke="#2A6CC8"/><path d="M1 6l3-3M6 1l1 3" stroke="#2A6CC8"/></svg>
<svg class="a" style="left:559px;top:56px" width="16" height="16" viewBox="0 0 16 16"><path d="M2 15l12-13" stroke="#333" stroke-width="1.5"/><circle cx="8" cy="8" r="2" fill="#fff" stroke="#2A6CC8"/><path d="M3 3l3 3M3 3h3M3 3v3" stroke="#2A6CC8"/></svg>
<svg class="a" style="left:583px;top:56px" width="16" height="16" viewBox="0 0 16 16"><path d="M3 1v14M8 1v14M1 4h14M1 9h14" stroke="#888" stroke-width="1"/><circle cx="8" cy="8" r="2" fill="#fff" stroke="#2A6CC8"/><path d="M9 8l3 7 1-3 3-1z" fill="#fff" stroke="#666"/></svg>
<svg class="a" style="left:607px;top:56px" width="16" height="16" viewBox="0 0 16 16"><path d="M2 2l12 12M14 2L2 14" stroke="#222" stroke-width="1.6"/><circle cx="8" cy="8" r="2" fill="#fff" stroke="#2A6CC8"/></svg>
<svg class="a" style="left:846px;top:56px" width="16" height="16" viewBox="0 0 16 16"><rect x="1.5" y="1.5" width="13" height="13" fill="none" stroke="#222" stroke-dasharray="1 1" stroke-dashoffset="0.5"/><circle cx="8" cy="9" r="4" fill="#E8A030" stroke="#A06010"/></svg>
<svg class="a" style="left:869px;top:56px" width="16" height="16" viewBox="0 0 16 16"><rect x="1.5" y="3.5" width="12" height="11" fill="none" stroke="#222" stroke-dasharray="1 1" stroke-dashoffset="0.5"/><path d="M3 4l5-3 6 2-3 3z" fill="#E8B840" stroke="#A07010"/><rect x="12" y="1" width="3" height="3" fill="#2A6CC8"/></svg>
<svg class="a" style="left:898px;top:56px" width="16" height="16" viewBox="0 0 16 16"><rect x="1.5" y="1.5" width="13" height="13" fill="none" stroke="#222" stroke-dasharray="1 1" stroke-dashoffset="0.5"/><circle cx="8" cy="8" r="3" fill="#C8C8C8" stroke="#999"/></svg>
<svg class="a" style="left:922px;top:56px" width="16" height="16" viewBox="0 0 16 16"><rect x="1.5" y="1.5" width="13" height="13" fill="none" stroke="#222" stroke-dasharray="1 1" stroke-dashoffset="0.5"/><circle cx="8" cy="8" r="3" fill="#F2C020" stroke="#C09010"/></svg>
<svg class="a" style="left:948px;top:56px" width="16" height="16" viewBox="0 0 16 16"><circle cx="6" cy="6" r="3" fill="#F0E0A0" stroke="#C0A040"/><path d="M6 0v3M0 6h3M2 2l2 2" stroke="#E0C040"/><path d="M7 6l3 9 1-3 4-1z" fill="#fff" stroke="#666"/></svg>
<svg class="a" style="left:971px;top:56px" width="16" height="16" viewBox="0 0 16 16"><circle cx="8" cy="8" r="3.5" fill="#F5C000" stroke="#E09000"/><path d="M8 0v3M8 13v3M0 8h3M13 8h3M2 2l2 2M12 12l2 2M2 14l2-2M12 4l2-2" stroke="#F0B000" stroke-width="1.3"/></svg>
<svg class="a" style="left:1001px;top:56px" width="16" height="16" viewBox="0 0 16 16"><ellipse cx="9" cy="6" rx="6" ry="4" fill="none" stroke="#333" stroke-width="1.2"/><path d="M5 9c-1 2 0 4-2 6" stroke="#333" stroke-width="1.2" fill="none"/></svg>
<svg class="a" style="left:1024px;top:56px" width="16" height="16" viewBox="0 0 16 16"><rect x="1.5" y="1.5" width="11" height="11" fill="none" stroke="#222" stroke-dasharray="1 1" stroke-dashoffset="0.5"/><path d="M8 6l3 9 1-3 4-1z" fill="#fff" stroke="#666"/></svg>
<svg class="a" style="left:1049px;top:56px" width="16" height="16" viewBox="0 0 16 16"><rect x="1.5" y="1.5" width="11" height="11" fill="none" stroke="#222" stroke-dasharray="1 1" stroke-dashoffset="0.5"/><rect x="7" y="7" width="8" height="8" fill="#5A86D8" stroke="#2A4E98"/></svg>
<svg class="a" style="left:1073px;top:56px" width="16" height="16" viewBox="0 0 16 16"><rect x="1.5" y="1.5" width="11" height="11" fill="none" stroke="#222" stroke-dasharray="1 1" stroke-dashoffset="0.5"/><path d="M9 9l6 6M15 9l-6 6" stroke="#E03030" stroke-width="1.8"/></svg>
<div class="act" style="left:1098px;top:52px;width:24px;height:24px"></div>
<svg class="a" style="left:1102px;top:56px" width="16" height="16" viewBox="0 0 16 16"><rect x="1.5" y="1.5" width="13" height="13" fill="none" stroke="#222" stroke-dasharray="1 1" stroke-dashoffset="0.5"/><circle cx="8" cy="8" r="2" fill="#fff" stroke="#2A6CC8" stroke-width="1.2"/></svg>
<div class="act" style="left:1123px;top:52px;width:24px;height:24px"></div>
<svg class="a" style="left:1127px;top:56px" width="16" height="16" viewBox="0 0 16 16"><rect x="1.5" y="1.5" width="13" height="13" fill="none" stroke="#222" stroke-dasharray="1 1" stroke-dashoffset="0.5"/><circle cx="14" cy="8" r="2" fill="#fff" stroke="#2A6CC8" stroke-width="1.2"/></svg>
<div class="sep" style="left:37px;top:56px;width:2px;height:17px"></div>
<div class="sep" style="left:260px;top:56px;width:2px;height:17px"></div>
<div class="sep" style="left:361px;top:56px;width:2px;height:17px"></div>
<div class="sep" style="left:892px;top:56px;width:2px;height:17px"></div>
<div class="sep" style="left:994px;top:56px;width:2px;height:17px"></div>
<div class="sep" style="left:1096px;top:56px;width:2px;height:17px"></div>
<div class="a" style="left:652px;top:53px;width:33px;height:23px;border:1px solid #A9A9A9;border-radius:2px;background:linear-gradient(#D9D9D9,#CDCDCD)"></div>
<div class="a" style="left:676px;top:54px;width:8px;height:21px;background:linear-gradient(#D4D4D4,#C8C8C8);border-left:1px solid #A9A9A9"></div>
<svg class="a" style="left:678px;top:64px" width="5" height="3" viewBox="0 0 5 3"><path d="M0 0h5l-2.5 2.5z" fill="#222"/></svg>
<div class="a" style="left:653px;top:54px;width:22px;height:21px;background:#fff"></div>
<div class="a" style="left:686px;top:53px;width:33px;height:23px;border:1px solid #A9A9A9;border-radius:2px;background:linear-gradient(#D9D9D9,#CDCDCD)"></div>
<div class="a" style="left:710px;top:54px;width:8px;height:21px;background:linear-gradient(#D4D4D4,#C8C8C8);border-left:1px solid #A9A9A9"></div>
<svg class="a" style="left:712px;top:64px" width="5" height="3" viewBox="0 0 5 3"><path d="M0 0h5l-2.5 2.5z" fill="#222"/></svg>
<div class="a" style="left:687px;top:64px;width:23px;height:2px;background:#111"></div>
<div class="a" style="left:719px;top:53px;width:33px;height:23px;border:1px solid #A9A9A9;border-radius:2px;background:linear-gradient(#D9D9D9,#CDCDCD)"></div>
<div class="a" style="left:743px;top:54px;width:8px;height:21px;background:linear-gradient(#D4D4D4,#C8C8C8);border-left:1px solid #A9A9A9"></div>
<svg class="a" style="left:745px;top:64px" width="5" height="3" viewBox="0 0 5 3"><path d="M0 0h5l-2.5 2.5z" fill="#222"/></svg>
<div class="a" style="left:720px;top:64px;width:23px;height:1px;background:#555"></div>
<div class="a" style="left:752px;top:53px;width:33px;height:23px;border:1px solid #A9A9A9;border-radius:2px;background:linear-gradient(#D9D9D9,#CDCDCD)"></div>
<div class="a" style="left:776px;top:54px;width:8px;height:21px;background:linear-gradient(#D4D4D4,#C8C8C8);border-left:1px solid #A9A9A9"></div>
<svg class="a" style="left:778px;top:64px" width="5" height="3" viewBox="0 0 5 3"><path d="M0 0h5l-2.5 2.5z" fill="#222"/></svg>

<div class="a" style="left:785px;top:53px;width:33px;height:23px;border:1px solid #A9A9A9;border-radius:2px;background:linear-gradient(#D9D9D9,#CDCDCD)"></div>
<div class="a" style="left:809px;top:54px;width:8px;height:21px;background:linear-gradient(#D4D4D4,#C8C8C8);border-left:1px solid #A9A9A9"></div>
<svg class="a" style="left:811px;top:64px" width="5" height="3" viewBox="0 0 5 3"><path d="M0 0h5l-2.5 2.5z" fill="#222"/></svg>

<div class="a" style="left:266px;top:79px;width:4px;height:688px;background:#D3E4FA"></div>
<div class="a" style="left:270px;top:79px;width:1px;height:714px;background:#22467E"></div>
<div class="a" style="left:271px;top:79px;width:3px;height:714px;background:#94B6E4"></div>
<div class="a" style="left:274px;top:79px;width:1px;height:714px;background:#22467E"></div>
<div class="a" style="left:0;top:79px;width:270px;height:17px;background:#9AB8E3"></div>
<svg class="a" style="left:1px;top:80px" width="14" height="14" viewBox="0 0 14 14"><circle cx="7" cy="7" r="5" fill="none" stroke="#2F6FD8" stroke-width="1.2"/><path d="M7 0v14M1 3l12 8M1 11l12-8" stroke="#2F6FD8" stroke-width=".9"/></svg>
<div class="t" style="left:18px;top:80px;color:#10203A;letter-spacing:-0.5px">Navigation Bar</div>
<svg class="a" style="left:238px;top:81px" width="10" height="12" viewBox="0 0 10 12"><path d="M2 1h5v5h1.5v1H.5V6H2zM4 7v5" stroke="#1D3F86" stroke-width="1.3" fill="none"/></svg>
<svg class="a" style="left:255px;top:82px" width="10" height="10" viewBox="0 0 10 10"><path d="M1 1l8 8M9 1l-8 8" stroke="#1D3F86" stroke-width="2.2"/></svg>
<div class="a" style="left:0;top:96px;width:266px;height:32px;background:linear-gradient(#E0ECFC,#CCDFF8 50%,#B9D3F5)"></div>
<svg class="a" style="left:-2px;top:92px" width="8" height="14" viewBox="0 0 8 14"><path d="M0 12a6 6 0 006-6" stroke="#1D2F7A" stroke-width="1.6" fill="none"/></svg>
<svg class="a" style="left:12px;top:103px" width="19" height="17" viewBox="0 0 19 17"><path d="M1 4h6l2 2h8v10H2z" fill="#EFC84E"/><path d="M1 7h17l-2 9H2z" fill="#FBE38A" stroke="#D6A83A" stroke-width=".6"/></svg>
<div class="t" style="left:36px;top:103px;font-size:17px;line-height:20px;font-weight:bold;color:#5685C2;transform:scaleX(0.9);transform-origin:0 0">Explorer</div>
<div class="tb" style="left:0;top:128px;width:255px;height:29px"></div>
<div class="dd" style="left:255px;top:128px;width:11px;height:29px;opacity:.6"></div>
<svg class="a" style="left:3px;top:134px" width="3" height="20" viewBox="0 0 3 20"><rect x="1" y="1" width="2" height="2" fill="#fff"/><rect x="0" y="0" width="2" height="2" fill="#4A78C0"/><rect x="1" y="5" width="2" height="2" fill="#fff"/><rect x="0" y="4" width="2" height="2" fill="#4A78C0"/><rect x="1" y="9" width="2" height="2" fill="#fff"/><rect x="0" y="8" width="2" height="2" fill="#4A78C0"/><rect x="1" y="13" width="2" height="2" fill="#fff"/><rect x="0" y="12" width="2" height="2" fill="#4A78C0"/><rect x="1" y="17" width="2" height="2" fill="#fff"/><rect x="0" y="16" width="2" height="2" fill="#4A78C0"/></svg>
<svg class="a" style="left:16px;top:135px" width="16" height="16" viewBox="0 0 16 16"><path d="M8 1L1 8h2v7h10V8h2z" fill="#FFF4D0" stroke="#333" stroke-width="1.2"/><rect x="7" y="10" width="3" height="5" fill="#E08020"/><rect x="11" y="2" width="2" height="4" fill="#8B2020"/></svg>
<svg class="a" style="left:41px;top:135px" width="16" height="16" viewBox="0 0 16 16"><circle cx="8" cy="8" r="6.5" fill="#E6EAF0" stroke="#B8BEC8"/><path d="M10 5L6 8l4 3" stroke="#A8B0BC" stroke-width="1.3" fill="none"/></svg>
<svg class="a" style="left:66px;top:135px" width="16" height="16" viewBox="0 0 16 16"><circle cx="8" cy="8" r="6.5" fill="#E6EAF0" stroke="#B8BEC8"/><path d="M6 5l4 3-4 3" stroke="#A8B0BC" stroke-width="1.3" fill="none"/></svg>
<svg class="a" style="left:91px;top:135px" width="16" height="16" viewBox="0 0 16 16"><rect x="1.5" y="1.5" width="13" height="13" fill="#fff" stroke="#556"/><circle cx="4" cy="4.5" r="1.2" fill="#3060D0"/><circle cx="4" cy="8" r="1.2" fill="#E03030"/><circle cx="4" cy="11.5" r="1.2" fill="#E0B020"/><path d="M6.5 4.5h6M6.5 8h6M6.5 11.5h6" stroke="#445"/></svg>
<svg class="a" style="left:125px;top:135px" width="16" height="16" viewBox="0 0 16 16"><circle cx="4.5" cy="10.5" r="2.4" fill="none" stroke="#333" stroke-width="1.4"/><circle cx="11.5" cy="10.5" r="2.4" fill="none" stroke="#333" stroke-width="1.4"/><path d="M7 10h2M2.2 10l1.5-5M13.9 10.5V4" stroke="#333" stroke-width="1.2"/></svg>
<svg class="a" style="left:149px;top:135px" width="16" height="16" viewBox="0 0 16 16"><path d="M4 3h11l-3 3H1zM4 7h11l-3 3H1zM4 11h11l-3 3H1z" fill="#4A86E8" stroke="#2650A0" stroke-width=".6"/></svg>
<svg class="a" style="left:175px;top:135px" width="16" height="16" viewBox="0 0 16 16"><path d="M3 8l5-6 6 3-4 4z" fill="#E8C050" stroke="#A08020"/><circle cx="9" cy="11" r="4.5" fill="#F2B020" stroke="#B07010"/><path d="M1 9l4-3" stroke="#6A60C0" stroke-width="1.5"/></svg>
<div class="sep" style="left:116px;top:133px;width:2px;height:20px"></div>
<div class="a" style="left:4px;top:163px;width:188px;height:20px;background:#fff;border:1px solid #8E8F8F;border-radius:2px"></div>
<div class="a" style="left:171px;top:164px;width:20px;height:18px;background:linear-gradient(#F3F3F3,#DDDDDD);border-left:1px solid #A0A0A0"></div>
<svg class="a" style="left:177px;top:171px" width="8" height="5" viewBox="0 0 8 5"><path d="M0 0h8l-4 4z" fill="#444"/></svg>
<svg class="a" style="left:5px;top:165px" width="16" height="16" viewBox="0 0 16 16"><rect x="1" y="3" width="3" height="11" fill="#9AA"/><rect x="4" y="1" width="11" height="9" fill="#1838C0" stroke="#A8B0B8"/><rect x="5" y="2" width="5" height="4" fill="#5080F0"/><path d="M7 13h5" stroke="#889" stroke-width="2"/></svg>
<div class="t" style="left:25px;top:166px;color:#000">All</div>
<div class="a" style="left:196px;top:161px;width:69px;height:24px;background:linear-gradient(#E3EEFC,#CFE1F8);border:1px solid #C9DCF5;border-radius:4px"></div>
<div class="t" style="left:205px;top:166px;color:#111">Search</div>
<svg class="a" style="left:248px;top:169px" width="10" height="8" viewBox="0 0 10 8"><path d="M1 1l3 3-3 3M5 1l3 3-3 3" stroke="#1E2F8E" stroke-width="1.4" fill="none"/></svg>
<div class="a" style="left:0;top:189px;width:267px;height:389px;background:#fff;border:1px solid #828790"></div>
<div class="a" style="left:248px;top:190px;width:18px;height:387px;background:#F0F0F0"></div>
<div class="a" style="left:249px;top:192px;width:16px;height:15px;border:1px solid #6E6E6E;border-radius:2px;background:linear-gradient(90deg,#FAFAFA,#E0E0E0 60%,#D2D2D2)"></div>
<svg class="a" style="left:253px;top:197px" width="8" height="5" viewBox="0 0 8 5"><path d="M0 4h8L4 0z" fill="#333"/></svg>
<div class="a" style="left:249px;top:208px;width:16px;height:153px;border:1px solid #6E6E6E;border-radius:2px;background:linear-gradient(90deg,#FAFAFA,#E0E0E0 60%,#D2D2D2)"></div>
<div class="a" style="left:249px;top:561px;width:16px;height:15px;border:1px solid #6E6E6E;border-radius:2px;background:linear-gradient(90deg,#FAFAFA,#E0E0E0 60%,#D2D2D2)"></div>
<svg class="a" style="left:253px;top:566px" width="8" height="5" viewBox="0 0 8 5"><path d="M0 0h8L4 4z" fill="#333"/></svg>
<svg class="a" style="left:22px;top:192px" width="16" height="16" viewBox="0 0 16 16"><path d="M1 4l6-3 8 7-3 7H1z" fill="#6E94C0"/><path d="M7 1l8 7-3 7-8-7z" fill="#A9C1DC"/><path d="M1 4v11h11" stroke="#4B6E98" fill="none"/></svg>
<div class="t" style="left:41px;top:193px;letter-spacing:-0.5px;">3D Polygons</div>
<svg class="a" style="left:11px;top:215px" width="6" height="9" viewBox="0 0 6 9"><path d="M0.5 0.5l4 3.5-4 3.5z" fill="#fff" stroke="#A0A0A0"/></svg>
<svg class="a" style="left:22px;top:211px" width="16" height="16" viewBox="0 0 16 16"><path d="M1 1v11h12z" fill="#3E6FD0" stroke="#2A4E9E"/><path d="M3 6v4h4z" fill="#9CC0F0"/><rect x="1" y="12" width="14" height="4" fill="#D8A030" stroke="#8A6010" stroke-width=".5"/></svg>
<div class="t" style="left:41px;top:212px;letter-spacing:-0.5px;">AutoCAD</div>
<svg class="a" style="left:22px;top:229px" width="16" height="16" viewBox="0 0 16 16"><rect x="1.5" y="1.5" width="8" height="12" fill="#E8EEF8" stroke="#7E8AA0"/><rect x="3.5" y="2.5" width="8" height="12" fill="#EEF3FA" stroke="#7E8AA0"/><path d="M6.5 3.5h6l2 2v10h-8z" fill="#F4F7FC" stroke="#7E8AA0"/></svg>
<div class="t" style="left:41px;top:230px;letter-spacing:-0.5px;">Batch</div>
<svg class="a" style="left:22px;top:248px" width="16" height="16" viewBox="0 0 16 16"><path d="M1.5 1.5h7l3 3v10h-10z" fill="#F4F7FC" stroke="#7E8AA0"/><path d="M10 6l4 4-4 6-4-6z" fill="#3FA050"/></svg>
<div class="t" style="left:41px;top:249px;letter-spacing:-0.5px;">Blocks</div>
<svg class="a" style="left:11px;top:270px" width="6" height="9" viewBox="0 0 6 9"><path d="M0.5 0.5l4 3.5-4 3.5z" fill="#fff" stroke="#A0A0A0"/></svg>
<svg class="a" style="left:22px;top:266px" width="16" height="16" viewBox="0 0 16 16"><rect x="1.5" y="1.5" width="12" height="13" fill="#F4F7FC" stroke="#7E8AA0"/><path d="M4 4h8M4 7h8M4 10h5" stroke="#5A7AB0"/><path d="M5 15l3-3M9 15l3-3M12 16l3-3" stroke="#E050D0" stroke-width="2"/><path d="M4 13l3-3" stroke="#E0C030" stroke-width="2"/></svg>
<div class="t" style="left:41px;top:267px;letter-spacing:-0.5px;">Data</div>
<svg class="a" style="left:10px;top:290px" width="6" height="6" viewBox="0 0 6 6"><path d="M5 0v5H0z" fill="#404040"/></svg>
<svg class="a" style="left:22px;top:284px" width="16" height="16" viewBox="0 0 16 16"><rect x="1.5" y="2.5" width="11" height="13" fill="#F4F7FC" stroke="#7E8AA0"/><path d="M5 13l9-11 2 1-9 11z" fill="#F0C040" stroke="#806020" stroke-width=".6"/><path d="M13 1l2 1-1 2" fill="#C05040"/></svg>
<div class="t" style="left:41px;top:285px;letter-spacing:-0.5px;">Design Data</div>
<svg class="a" style="left:29px;top:309px" width="6" height="6" viewBox="0 0 6 6"><path d="M5 0v5H0z" fill="#404040"/></svg>
<svg class="a" style="left:41px;top:303px" width="16" height="16" viewBox="0 0 16 16"><path d="M1.5 1.5h7l3 3v10h-10z" fill="#F4F7FC" stroke="#7E8AA0"/><path d="M5 9h10l-3 2H3zM5 12h10l-3 2H3zM5 15h10l-2 1H3z" fill="#4A86E8"/></svg>
<div class="t" style="left:60px;top:304px;font-weight:bold;letter-spacing:-0.3px;">blocks</div>
<div class="a" style="left:59px;top:320px;width:94px;height:18px;background:#000"></div>
<svg class="a" style="left:60px;top:321px" width="16" height="16" viewBox="0 0 16 16"><path d="M4 2h11l-3 3H1zM4 6h11l-3 3H1zM4 10h11l-3 3H1z" fill="#5E90E8"/><rect x="8" y="9" width="7" height="6" fill="#E0B030"/><path d="M9.5 9V7.5a2 2 0 014 0V9" stroke="#B08010" fill="none"/></svg>
<div class="a" style="left:79px;top:322px;width:14px;height:14px;border:1px solid #8E8F8F;background:linear-gradient(135deg,#DCDCDC,#F8F8F8)"></div>
<svg class="a" style="left:81px;top:324px" width="10" height="10" viewBox="0 0 10 10"><path d="M1 1l8 8M9 1l-8 8" stroke="#222" stroke-width="1.6"/></svg>
<div class="t" style="left:99px;top:322px;color:#fff;letter-spacing:-0.5px">BB_PRAC</div>
<svg class="a" style="left:60px;top:340px" width="16" height="16" viewBox="0 0 16 16"><path d="M4 2h11l-3 3H1zM4 6h11l-3 3H1zM4 10h11l-3 3H1z" fill="#5E90E8"/></svg>
<div class="a" style="left:79px;top:341px;width:14px;height:14px;border:1px solid #8E8F8F;background:linear-gradient(135deg,#DCDCDC,#F8F8F8)"></div>
<div class="t" style="left:99px;top:341px;color:#000;letter-spacing:-0.5px">BB_STRIP</div>
<svg class="a" style="left:60px;top:358px" width="16" height="16" viewBox="0 0 16 16"><path d="M4 2h11l-3 3H1zM4 6h11l-3 3H1zM4 10h11l-3 3H1z" fill="#5E90E8"/></svg>
<div class="a" style="left:79px;top:359px;width:14px;height:14px;border:1px solid #8E8F8F;background:linear-gradient(135deg,#DCDCDC,#F8F8F8)"></div>
<div class="t" style="left:99px;top:359px;color:#000;letter-spacing:-0.5px">BLOCKS</div>
<svg class="a" style="left:60px;top:377px" width="16" height="16" viewBox="0 0 16 16"><path d="M4 2h11l-3 3H1zM4 6h11l-3 3H1zM4 10h11l-3 3H1z" fill="#5E90E8"/></svg>
<div class="a" style="left:79px;top:378px;width:14px;height:14px;border:1px solid #8E8F8F;background:linear-gradient(135deg,#DCDCDC,#F8F8F8)"></div>
<div class="t" style="left:99px;top:378px;color:#000;letter-spacing:-0.5px">C</div>
<svg class="a" style="left:60px;top:395px" width="16" height="16" viewBox="0 0 16 16"><path d="M4 2h11l-3 3H1zM4 6h11l-3 3H1zM4 10h11l-3 3H1z" fill="#5E90E8"/></svg>
<div class="a" style="left:79px;top:396px;width:14px;height:14px;border:1px solid #8E8F8F;background:linear-gradient(135deg,#DCDCDC,#F8F8F8)"></div>
<div class="t" style="left:99px;top:396px;color:#000;letter-spacing:-0.5px">D</div>
<svg class="a" style="left:60px;top:414px" width="16" height="16" viewBox="0 0 16 16"><path d="M4 2h11l-3 3H1zM4 6h11l-3 3H1zM4 10h11l-3 3H1z" fill="#5E90E8"/></svg>
<div class="a" style="left:79px;top:415px;width:14px;height:14px;border:1px solid #8E8F8F;background:linear-gradient(135deg,#DCDCDC,#F8F8F8)"></div>
<div class="t" style="left:99px;top:415px;color:#000;letter-spacing:-0.5px">PIT_LIMIT</div>
<svg class="a" style="left:60px;top:432px" width="16" height="16" viewBox="0 0 16 16"><path d="M4 2h11l-3 3H1zM4 6h11l-3 3H1zM4 10h11l-3 3H1z" fill="#5E90E8"/></svg>
<div class="a" style="left:79px;top:433px;width:14px;height:14px;border:1px solid #8E8F8F;background:linear-gradient(135deg,#DCDCDC,#F8F8F8)"></div>
<div class="t" style="left:99px;top:433px;color:#000;letter-spacing:-0.5px">PIT_MINE</div>
<svg class="a" style="left:60px;top:450px" width="16" height="16" viewBox="0 0 16 16"><path d="M4 2h11l-3 3H1zM4 6h11l-3 3H1zM4 10h11l-3 3H1z" fill="#5E90E8"/></svg>
<div class="a" style="left:79px;top:451px;width:14px;height:14px;border:1px solid #8E8F8F;background:linear-gradient(135deg,#DCDCDC,#F8F8F8)"></div>
<div class="t" style="left:99px;top:451px;color:#000;letter-spacing:-0.5px">PIT_STRIPDES</div>
<svg class="a" style="left:60px;top:469px" width="16" height="16" viewBox="0 0 16 16"><path d="M4 2h11l-3 3H1zM4 6h11l-3 3H1zM4 10h11l-3 3H1z" fill="#5E90E8"/></svg>
<div class="a" style="left:79px;top:470px;width:14px;height:14px;border:1px solid #8E8F8F;background:linear-gradient(135deg,#DCDCDC,#F8F8F8)"></div>
<div class="t" style="left:99px;top:470px;color:#000;letter-spacing:-0.5px">RESGRAPH</div>
<svg class="a" style="left:60px;top:487px" width="16" height="16" viewBox="0 0 16 16"><path d="M4 2h11l-3 3H1zM4 6h11l-3 3H1zM4 10h11l-3 3H1z" fill="#5E90E8"/></svg>
<div class="a" style="left:79px;top:488px;width:14px;height:14px;border:1px solid #8E8F8F;background:linear-gradient(135deg,#DCDCDC,#F8F8F8)"></div>
<div class="t" style="left:99px;top:488px;color:#000;letter-spacing:-0.5px">SOLID_STRIP</div>
<svg class="a" style="left:60px;top:506px" width="16" height="16" viewBox="0 0 16 16"><path d="M4 2h11l-3 3H1zM4 6h11l-3 3H1zM4 10h11l-3 3H1z" fill="#5E90E8"/></svg>
<div class="a" style="left:79px;top:507px;width:14px;height:14px;border:1px solid #8E8F8F;background:linear-gradient(135deg,#DCDCDC,#F8F8F8)"></div>
<div class="t" style="left:99px;top:507px;color:#000;letter-spacing:-0.5px">SOLID_TAMBANG</div>
<svg class="a" style="left:60px;top:524px" width="16" height="16" viewBox="0 0 16 16"><path d="M4 2h11l-3 3H1zM4 6h11l-3 3H1zM4 10h11l-3 3H1z" fill="#5E90E8"/></svg>
<div class="a" style="left:79px;top:525px;width:14px;height:14px;border:1px solid #8E8F8F;background:linear-gradient(135deg,#DCDCDC,#F8F8F8)"></div>
<div class="t" style="left:99px;top:525px;color:#000;letter-spacing:-0.5px">SOLID_XXXX</div>
<svg class="a" style="left:60px;top:543px" width="16" height="16" viewBox="0 0 16 16"><path d="M4 2h11l-3 3H1zM4 6h11l-3 3H1zM4 10h11l-3 3H1z" fill="#5E90E8"/></svg>
<div class="a" style="left:79px;top:544px;width:14px;height:14px;border:1px solid #8E8F8F;background:linear-gradient(135deg,#DCDCDC,#F8F8F8)"></div>
<div class="t" style="left:99px;top:544px;color:#000;letter-spacing:-0.5px">STRIPS</div>
<svg class="a" style="left:30px;top:565px" width="6" height="9" viewBox="0 0 6 9"><path d="M0.5 0.5l4 3.5-4 3.5z" fill="#fff" stroke="#A0A0A0"/></svg>
<svg class="a" style="left:41px;top:561px" width="16" height="16" viewBox="0 0 16 16"><path d="M1.5 1.5h7l3 3v10h-10z" fill="#F4F7FC" stroke="#7E8AA0"/><path d="M5 9h10l-3 2H3zM5 12h10l-3 2H3zM5 15h10l-2 1H3z" fill="#4A86E8"/></svg>
<div class="t" style="left:60px;top:562px;letter-spacing:-0.5px;">dholes</div>
<div class="a" style="left:0;top:578px;width:266px;height:8px;background:linear-gradient(#E4EEFC,#C3D9F6)"></div>
<svg class="a" style="left:126px;top:580px" width="18" height="3" viewBox="0 0 18 3"><path d="M0 1h2M3 1h2M6 1h2M9 1h2M12 1h2M15 1h2" stroke="#6A8CC0" stroke-width="2"/></svg>
<div class="a" style="left:0;top:585px;width:270px;height:1px;background:#3A5F9A"></div>
<div class="a" style="left:0;top:586px;width:270px;height:29px;background:linear-gradient(#FDDCAE,#FAC27C 40%,#F7A43C 58%,#F9B550 75%,#FCD38A)"></div>
<div class="a" style="left:0;top:615px;width:270px;height:1px;background:#3A5F9A"></div>
<svg class="a" style="left:5px;top:591px" width="19" height="19" viewBox="0 0 19 19"><path d="M1 4h6l2 2h8v10H2z" fill="#EFC84E"/><path d="M1 7h17l-2 9H2z" fill="#FBE38A" stroke="#D6A83A" stroke-width=".6"/></svg>
<div class="t" style="left:28px;top:593px;font-size:12px;font-weight:bold;color:#000;letter-spacing:-0.65px">Explorer</div>
<div class="a" style="left:0;top:616px;width:270px;height:29px;background:linear-gradient(#DCEAFC,#C7DCF8 45%,#B4D0F4 55%,#C3DBF8 85%,#CFE3FA)"></div>
<div class="a" style="left:0;top:645px;width:270px;height:1px;background:#3A5F9A"></div>
<svg class="a" style="left:5px;top:621px" width="19" height="19" viewBox="0 0 19 19"><path d="M1 7h6l2 2h8v8H2z" fill="#EFC84E"/><path d="M8 1l6 4-3 6-6-4z" fill="#E8F0FA" stroke="#6A8AC0"/><circle cx="9" cy="5" r="2" fill="#E07050"/><path d="M1 10h17l-2 7H2z" fill="#FBE38A" stroke="#D6A83A" stroke-width=".6"/></svg>
<div class="t" style="left:28px;top:623px;font-size:12px;font-weight:bold;color:#233E7A;letter-spacing:-0.65px">Loaded Data</div>
<div class="a" style="left:0;top:646px;width:270px;height:29px;background:linear-gradient(#DCEAFC,#C7DCF8 45%,#B4D0F4 55%,#C3DBF8 85%,#CFE3FA)"></div>
<div class="a" style="left:0;top:675px;width:270px;height:1px;background:#3A5F9A"></div>
<svg class="a" style="left:5px;top:651px" width="19" height="19" viewBox="0 0 19 19"><rect x="1.5" y="2.5" width="15" height="14" fill="#E8F0FA" stroke="#6A7A90"/><rect x="1.5" y="2.5" width="15" height="3" fill="#4A7AD0"/><path d="M4 15l12-13" stroke="#2A5AB0" stroke-width="2"/><path d="M3 9h5M3 12h4" stroke="#C05050"/></svg>
<div class="t" style="left:28px;top:653px;font-size:12px;font-weight:bold;color:#233E7A;letter-spacing:-0.65px">Projects - Practice</div>
<div class="a" style="left:0;top:676px;width:270px;height:29px;background:linear-gradient(#DCEAFC,#C7DCF8 45%,#B4D0F4 55%,#C3DBF8 85%,#CFE3FA)"></div>
<div class="a" style="left:0;top:705px;width:270px;height:1px;background:#3A5F9A"></div>
<svg class="a" style="left:5px;top:681px" width="19" height="19" viewBox="0 0 19 19"><circle cx="6" cy="5" r="3" fill="#E0B080"/><path d="M1 16c0-5 2-7 5-7s5 2 5 7z" fill="#6A9A50"/><circle cx="12" cy="8" r="3" fill="#E8C090"/><path d="M7 18c0-5 2-7 5-7s5 2 5 7z" fill="#4A7AC0"/></svg>
<div class="t" style="left:28px;top:683px;font-size:12px;font-weight:bold;color:#233E7A;letter-spacing:-0.65px">Sessions - None</div>
<div class="a" style="left:0;top:706px;width:270px;height:29px;background:linear-gradient(#DCEAFC,#C7DCF8 45%,#B4D0F4 55%,#C3DBF8 85%,#CFE3FA)"></div>
<div class="a" style="left:0;top:735px;width:270px;height:1px;background:#3A5F9A"></div>
<svg class="a" style="left:5px;top:711px" width="19" height="19" viewBox="0 0 19 19"><rect x="1.5" y="1.5" width="15" height="11" fill="#3A7AD8" stroke="#5A6A80"/><rect x="3" y="3" width="12" height="8" fill="#6AAAF0"/><path d="M6 16h6M9 13v3" stroke="#8A98A8" stroke-width="2"/></svg>
<div class="t" style="left:28px;top:713px;font-size:12px;font-weight:bold;color:#233E7A;letter-spacing:-0.65px">Layout - None</div>
<div class="a" style="left:0;top:736px;width:270px;height:29px;background:linear-gradient(#DCEAFC,#C7DCF8 45%,#B4D0F4 55%,#C3DBF8 85%,#CFE3FA)"></div>
<div class="a" style="left:0;top:765px;width:270px;height:1px;background:#3A5F9A"></div>
<svg class="a" style="left:5px;top:741px" width="19" height="19" viewBox="0 0 19 19"><circle cx="6" cy="6" r="4.6" fill="none" stroke="#7C8A84" stroke-width="2" stroke-dasharray="1.6 1.3"/><circle cx="6" cy="6" r="3" fill="#9AA6A0"/><circle cx="6" cy="6" r="1.2" fill="#E8F0EC"/><circle cx="12" cy="12" r="4.6" fill="none" stroke="#6E7C76" stroke-width="2" stroke-dasharray="1.6 1.3"/><circle cx="12" cy="12" r="3" fill="#8E9A94"/><circle cx="12" cy="12" r="1.2" fill="#E8F0EC"/></svg>
<div class="t" style="left:28px;top:743px;font-size:12px;font-weight:bold;color:#233E7A;letter-spacing:-0.65px">Modules</div>
<div class="a" style="left:0;top:766px;width:270px;height:2px;background:#5A7FB8"></div>
<div class="a" style="left:0;top:768px;width:270px;height:25px;background:#AECFF7"></div>
<div class="a" style="left:277px;top:81px;width:74px;height:23px;background:linear-gradient(#F8FBFF,#DDE8F8);border:1px solid #A9C4EA;border-bottom:none;border-radius:4px 4px 0 0"></div>
<svg class="a" style="left:280px;top:86px" width="16" height="15" viewBox="0 0 16 15"><rect x="4.5" y="6.5" width="11" height="8" fill="#E4EAF4" stroke="#3A4A60"/><path d="M0.5 5l5-4 6 2v5l-5 4-6-2z" fill="#2E6BD8"/><path d="M0.5 5l6 2 5-4M6.5 7v5" stroke="#9CC0F4" stroke-width=".8" fill="none"/></svg>
<div class="t" style="left:300px;top:86px;color:#1B3D8A;letter-spacing:-0.6px">BLOCKS</div>
<svg class="a" style="left:1557px;top:86px" width="10" height="10" viewBox="0 0 10 10"><path d="M1 1l8 8M9 1l-8 8" stroke="#1D3F86" stroke-width="2.2"/></svg>
<div class="a" style="left:276px;top:103px;width:1294px;height:1px;background:#fff"></div>
<div class="a" style="left:350px;top:102px;width:1220px;height:1px;background:#9FBFE8"></div>
<div class="a" style="left:1600px;top:0;width:1px;height:793px;background:#D6E7FC"></div>
<svg class="a" style="left:276px;top:104px;overflow:visible" width="1293" height="495" viewBox="0 0 1293 495"><defs><clipPath id="cp"><polygon points="292.0,-4.0 292.6,5.8 325.5,57.2 360.0,100.7 370.5,138.0 375.1,156.2 374.7,183.9 373.0,196.7 370.4,205.2 375.1,213.7 383.6,224.4 411.3,252.1 415.6,265.9 420.9,280.8 428.4,293.6 438.2,307.8 459.5,330.3 476.1,357.5 499.7,404.9 523.4,443.9 528.1,447.5 549.4,445.6 563.6,444.6 589.7,451.0 603.9,455.8 623.5,468.4 639.5,479.1 655.5,488.9 662.6,492.4 667.9,491.5 676.8,488.0 694.5,476.4 719.3,466.7 758.4,438.3 794.8,409.9 855.0,399.1 868.0,386.1 888.1,375.4 908.3,366.4 910.6,368.3 913.0,384.9 907.1,410.9 901.2,442.9 934.3,451.6 965.1,439.3 1002.9,454.0 1002.2,294.9 968.6,306.8 933.1,312.7 914.2,297.3 921.3,271.1 920.8,259.3 924.4,256.5 955.1,226.2 958.7,214.3 970.5,176.5 974.1,171.7 1001.8,143.3 1001.3,130.3 974.4,100.4 975.1,88.3 978.7,69.9 990.0,59.2 1002.6,46.4 993.6,32.9 986.5,18.7 983.0,9.5 982.0,-4.0"/></clipPath><clipPath id="vr"><rect x="0" y="0" width="1293" height="495"/></clipPath></defs><g clip-path="url(#vr)">
<rect width="1293" height="495" fill="#000"/>
<path clip-path="url(#cp)" d="M198.6 -19.4L1106.0 -40.0M201.1 -5.6L1108.3 -26.1M203.6 8.2L1110.6 -12.1M206.1 22.0L1112.9 1.8M208.5 35.8L1115.1 15.8M211.0 49.7L1117.4 29.7M213.5 63.5L1119.7 43.7M216.0 77.2L1121.9 57.6M218.4 91.0L1124.2 71.5M220.9 104.8L1126.5 85.4M223.4 118.6L1128.7 99.3M225.8 132.3L1131.0 113.2M228.3 146.1L1133.3 127.1M230.8 159.9L1135.5 141.0M233.2 173.6L1137.8 154.9M235.7 187.3L1140.1 168.8M238.1 201.1L1142.3 182.6M240.6 214.8L1144.6 196.5M243.0 228.5L1146.8 210.4M245.5 242.2L1149.1 224.2M248.0 255.9L1151.4 238.0M250.4 269.6L1153.6 251.9M252.9 283.3L1155.9 265.7M255.3 297.0L1158.1 279.5M257.8 310.7L1160.4 293.3M260.2 324.3L1162.6 307.1M262.7 338.0L1164.9 320.9M265.1 351.7L1167.1 334.7M267.6 365.3L1169.4 348.5M270.0 379.0L1171.6 362.3M272.4 392.6L1173.9 376.1M274.9 406.2L1176.1 389.8M277.3 419.8L1178.3 403.6M279.8 433.5L1180.6 417.3M282.2 447.1L1182.8 431.1M284.6 460.7L1185.1 444.8M287.1 474.3L1187.3 458.5M289.5 487.9L1189.5 472.3M291.9 501.5L1191.8 486.0M294.4 515.0L1194.0 499.7M296.8 528.6L1196.2 513.4M299.2 542.2L1198.5 527.1M198.6 -19.4L301.7 555.7M212.7 -19.8L315.6 555.5M226.7 -20.1L329.5 555.3M240.8 -20.4L343.4 555.0M254.8 -20.7L357.4 554.8M268.9 -21.0L371.3 554.6M283.0 -21.4L385.2 554.3M297.0 -21.7L399.2 554.1M311.1 -22.0L413.1 553.9M325.2 -22.3L427.1 553.6M339.3 -22.6L441.0 553.4M353.4 -23.0L455.0 553.2M367.5 -23.3L469.0 552.9M381.6 -23.6L482.9 552.7M395.6 -23.9L496.9 552.5M409.8 -24.2L510.9 552.2M423.9 -24.6L524.8 552.0M438.0 -24.9L538.8 551.8M452.1 -25.2L552.8 551.6M466.2 -25.5L566.8 551.3M480.3 -25.8L580.8 551.1M494.5 -26.2L594.8 550.9M508.6 -26.5L608.8 550.6M522.7 -26.8L622.8 550.4M536.9 -27.1L636.8 550.2M551.0 -27.4L650.8 549.9M565.2 -27.8L664.9 549.7M579.3 -28.1L678.9 549.5M593.5 -28.4L692.9 549.2M607.7 -28.7L706.9 549.0M621.8 -29.0L721.0 548.8M636.0 -29.4L735.0 548.5M650.2 -29.7L749.1 548.3M664.3 -30.0L763.1 548.1M678.5 -30.3L777.2 547.8M692.7 -30.7L791.2 547.6M706.9 -31.0L805.3 547.4M721.1 -31.3L819.4 547.1M735.3 -31.6L833.4 546.9M749.5 -31.9L847.5 546.7M763.7 -32.3L861.6 546.4M777.9 -32.6L875.7 546.2M792.2 -32.9L889.7 546.0M806.4 -33.2L903.8 545.7M820.6 -33.6L917.9 545.5M834.8 -33.9L932.0 545.3M849.1 -34.2L946.1 545.0M863.3 -34.5L960.2 544.8M877.6 -34.9L974.4 544.5M891.8 -35.2L988.5 544.3M906.1 -35.5L1002.6 544.1M920.3 -35.8L1016.7 543.8M934.6 -36.2L1030.8 543.6M948.8 -36.5L1045.0 543.4M963.1 -36.8L1059.1 543.1M977.4 -37.1L1073.2 542.9M991.7 -37.4L1087.4 542.7M1005.9 -37.8L1101.5 542.4M1020.2 -38.1L1115.7 542.2M1034.5 -38.4L1129.9 542.0M1048.8 -38.7L1144.0 541.7M1063.1 -39.1L1158.2 541.5M1077.4 -39.4L1172.4 541.3M1091.7 -39.7L1186.5 541.0" stroke="#0000FF" stroke-width="1" fill="none" shape-rendering="crispEdges"/>
<polyline points="292.6,5.8 325.5,57.2 360.0,100.7 370.5,138.0 375.1,156.2 374.7,183.9 373.0,196.7 370.4,205.2 375.1,213.7 383.6,224.4 411.3,252.1 415.6,265.9 420.9,280.8 428.4,293.6 438.2,307.8 459.5,330.3 476.1,357.5 499.7,404.9 523.4,443.9 528.1,447.5 549.4,445.6 563.6,444.6 589.7,451.0 603.9,455.8 623.5,468.4 639.5,479.1 655.5,488.9 662.6,492.4 667.9,491.5 676.8,488.0 694.5,476.4 719.3,466.7 758.4,438.3 794.8,409.9 855.0,399.1 868.0,386.1 888.1,375.4 908.3,366.4 910.6,368.3 913.0,384.9 907.1,410.9 901.2,442.9 934.3,451.6 965.1,439.3 1002.9,454.0 1002.2,294.9 968.6,306.8 933.1,312.7 914.2,297.3 921.3,271.1 920.8,259.3 924.4,256.5 955.1,226.2 958.7,214.3 970.5,176.5 974.1,171.7 1001.8,143.3 1001.3,130.3 974.4,100.4 975.1,88.3 978.7,69.9 990.0,59.2 1002.6,46.4 993.6,32.9 986.5,18.7 983.0,9.5 982.0,-4.0" fill="none" stroke="#00F000" stroke-width="1" shape-rendering="crispEdges"/>
</g><rect x="1" y="1" width="1291" height="493" fill="none" stroke="#0000FF" stroke-width="2"/>
<path d="M691 237.5V197.5" stroke="#80FF00" stroke-width="3.5"/><path d="M686 197.5h10l-5 -18z" fill="#80FF00"/>
<path d="M691 237.5H731" stroke="#FF0000" stroke-width="3"/><path d="M731 233.0v9l20 -4.5z" fill="#FF0000"/>
<circle cx="691" cy="237.5" r="4.7" fill="#00BFFF"/>
<text x="693.3" y="175.5" font-size="10.5" font-weight="bold" fill="#80D000" text-anchor="middle" font-family="Liberation Sans">Y</text>
<text x="693" y="248.5" font-size="10" font-weight="bold" fill="#00BFFF" text-anchor="middle" font-family="Liberation Sans">Z</text>
<text x="765.2" y="247.5" font-size="10.5" font-weight="bold" fill="#FF0000" text-anchor="middle" font-family="Liberation Sans">X</text>
<rect x="292" y="5" width="2" height="2" fill="#00F000"/><rect x="324" y="56" width="2" height="2" fill="#00F000"/><rect x="359" y="100" width="2" height="2" fill="#00F000"/><rect x="370" y="137" width="2" height="2" fill="#00F000"/><rect x="374" y="155" width="2" height="2" fill="#00F000"/><rect x="374" y="183" width="2" height="2" fill="#00F000"/><rect x="372" y="196" width="2" height="2" fill="#00F000"/><rect x="369" y="204" width="2" height="2" fill="#00F000"/><rect x="374" y="213" width="2" height="2" fill="#00F000"/><rect x="383" y="223" width="2" height="2" fill="#00F000"/><rect x="410" y="251" width="2" height="2" fill="#00F000"/><rect x="415" y="265" width="2" height="2" fill="#00F000"/><rect x="420" y="280" width="2" height="2" fill="#00F000"/><rect x="427" y="293" width="2" height="2" fill="#00F000"/><rect x="437" y="307" width="2" height="2" fill="#00F000"/><rect x="458" y="329" width="2" height="2" fill="#00F000"/><rect x="475" y="356" width="2" height="2" fill="#00F000"/><rect x="499" y="404" width="2" height="2" fill="#00F000"/><rect x="522" y="443" width="2" height="2" fill="#00F000"/><rect x="527" y="446" width="2" height="2" fill="#00F000"/><rect x="548" y="445" width="2" height="2" fill="#00F000"/><rect x="563" y="444" width="2" height="2" fill="#00F000"/><rect x="589" y="450" width="2" height="2" fill="#00F000"/><rect x="603" y="455" width="2" height="2" fill="#00F000"/><rect x="622" y="467" width="2" height="2" fill="#00F000"/><rect x="638" y="478" width="2" height="2" fill="#00F000"/><rect x="654" y="488" width="2" height="2" fill="#00F000"/><rect x="662" y="491" width="2" height="2" fill="#00F000"/><rect x="667" y="490" width="2" height="2" fill="#00F000"/><rect x="676" y="487" width="2" height="2" fill="#00F000"/><rect x="694" y="475" width="2" height="2" fill="#00F000"/><rect x="718" y="466" width="2" height="2" fill="#00F000"/><rect x="757" y="437" width="2" height="2" fill="#00F000"/><rect x="794" y="409" width="2" height="2" fill="#00F000"/><rect x="854" y="398" width="2" height="2" fill="#00F000"/><rect x="867" y="385" width="2" height="2" fill="#00F000"/><rect x="887" y="374" width="2" height="2" fill="#00F000"/><rect x="907" y="365" width="2" height="2" fill="#00F000"/><rect x="910" y="367" width="2" height="2" fill="#00F000"/><rect x="912" y="384" width="2" height="2" fill="#00F000"/><rect x="906" y="410" width="2" height="2" fill="#00F000"/><rect x="900" y="442" width="2" height="2" fill="#00F000"/><rect x="933" y="451" width="2" height="2" fill="#00F000"/><rect x="964" y="438" width="2" height="2" fill="#00F000"/><rect x="1002" y="453" width="2" height="2" fill="#00F000"/><rect x="1001" y="294" width="2" height="2" fill="#00F000"/><rect x="968" y="306" width="2" height="2" fill="#00F000"/><rect x="932" y="312" width="2" height="2" fill="#00F000"/><rect x="913" y="296" width="2" height="2" fill="#00F000"/><rect x="920" y="270" width="2" height="2" fill="#00F000"/><rect x="920" y="258" width="2" height="2" fill="#00F000"/><rect x="923" y="256" width="2" height="2" fill="#00F000"/><rect x="954" y="225" width="2" height="2" fill="#00F000"/><rect x="958" y="213" width="2" height="2" fill="#00F000"/><rect x="970" y="176" width="2" height="2" fill="#00F000"/><rect x="973" y="171" width="2" height="2" fill="#00F000"/><rect x="1001" y="142" width="2" height="2" fill="#00F000"/><rect x="1000" y="129" width="2" height="2" fill="#00F000"/><rect x="973" y="99" width="2" height="2" fill="#00F000"/><rect x="974" y="87" width="2" height="2" fill="#00F000"/><rect x="978" y="69" width="2" height="2" fill="#00F000"/><rect x="989" y="58" width="2" height="2" fill="#00F000"/><rect x="1002" y="45" width="2" height="2" fill="#00F000"/><rect x="993" y="32" width="2" height="2" fill="#00F000"/><rect x="986" y="18" width="2" height="2" fill="#00F000"/><rect x="982" y="8" width="2" height="2" fill="#00F000"/><rect x="0.5" y="-0.5" width="4" height="4" fill="#000" stroke="#fff" stroke-width="0.8"/><rect x="1288.5" y="-0.5" width="4" height="4" fill="#000" stroke="#fff" stroke-width="0.8"/><rect x="0.5" y="490.5" width="4" height="4" fill="#000" stroke="#fff" stroke-width="0.8"/><rect x="1288.5" y="490.5" width="4" height="4" fill="#000" stroke="#fff" stroke-width="0.8"/><circle cx="646.5" cy="0" r="2.5" fill="#000" stroke="#fff" stroke-width="0.8"/><circle cx="646.5" cy="495" r="2.5" fill="#000" stroke="#fff" stroke-width="0.8"/><circle cx="0" cy="247.5" r="2.5" fill="#000" stroke="#fff" stroke-width="0.8"/><circle cx="1293" cy="247.5" r="2.5" fill="#000" stroke="#fff" stroke-width="0.8"/></svg>
<div class="a" style="left:275px;top:599px;width:1296px;height:1px;background:#fff"></div>
<div class="a" style="left:275px;top:600px;width:1296px;height:1px;background:#22467E"></div>
<div class="a" style="left:275px;top:601px;width:1296px;height:3px;background:#94B6E4"></div>
<div class="a" style="left:275px;top:604px;width:1296px;height:1px;background:#22467E"></div>
<div class="a" style="left:275px;top:605px;width:1296px;height:16px;background:#95B4E0"></div>
<svg class="a" style="left:275px;top:605px" width="17" height="16" viewBox="0 0 17 16"><rect x="1.5" y="3.5" width="10" height="11" fill="#F4F7FC" stroke="#7E8AA0"/><text x="3" y="9" font-size="5" fill="#557">A</text><path d="M5 12l8-9 2 2-8 9z" fill="#F0C040" stroke="#806020" stroke-width=".6"/><path d="M13 3l2 2 1-2-1-1z" fill="#D06050"/></svg>
<div class="t" style="left:293px;top:606px;color:#111;letter-spacing:-0.4px">Feedback</div>
<svg class="a" style="left:1539px;top:606px" width="10" height="12" viewBox="0 0 10 12"><path d="M2 1h5v5h1.5v1H.5V6H2zM4 7v5" stroke="#1D3F86" stroke-width="1.3" fill="none"/></svg>
<svg class="a" style="left:1556px;top:607px" width="9" height="9" viewBox="0 0 9 9"><path d="M1 1l7 7M8 1l-7 7" stroke="#1D3F86" stroke-width="2.2"/></svg>
<div class="a" style="left:275px;top:621px;width:1296px;height:150px;background:#BFDBFF"></div>
<div class="a" style="left:275px;top:622px;width:30px;height:144px;background:linear-gradient(90deg,#E3EEFD,#C2D8F6);border-radius:0 3px 3px 0"></div>
<div class="a" style="left:275px;top:752px;width:30px;height:14px;background:linear-gradient(90deg,#B9D2F3,#9DBDE9)"></div>
<svg class="a" style="left:293px;top:755px" width="8" height="8" viewBox="0 0 8 8"><path d="M1 0v8M3 0l4 4-4 4z" fill="#7090C0" stroke="#C8D8F0" stroke-width=".5"/></svg>
<svg class="a" style="left:275px;top:621px" width="8" height="10" viewBox="0 0 8 10"><path d="M0 7a7 7 0 006-6" stroke="#1D2F7A" stroke-width="1.6" fill="none"/></svg>
<svg class="a" style="left:280px;top:628px" width="18" height="3" viewBox="0 0 18 3"><path d="M1 1h2M4 1h2M7 1h2M10 1h2M13 1h2M16 1h2" stroke="#5A80C0" stroke-width="2"/></svg>
<svg class="a" style="left:282px;top:638px" width="16" height="16" viewBox="0 0 16 16"><rect x="1" y="1" width="14" height="14" fill="#5856B0" stroke="#2A2A80"/><rect x="3" y="1" width="10" height="7" fill="#E8ECF4"/><rect x="5" y="10" width="5" height="4" fill="#222"/></svg>
<svg class="a" style="left:282px;top:660px" width="16" height="16" viewBox="0 0 16 16"><rect x="1.5" y="1.5" width="8" height="9" fill="#F4F7FC" stroke="#7E8AA0"/><rect x="6.5" y="5.5" width="8" height="10" fill="#F4F7FC" stroke="#5A7AB0"/><path d="M8 8h5M8 10h5M8 12h5" stroke="#5A7AB0"/></svg>
<svg class="a" style="left:282px;top:685px" width="16" height="16" viewBox="0 0 16 16"><path d="M2 10l7-7 5 5-5 4H5z" fill="#F4F4F4" stroke="#888"/><path d="M4 15h10" stroke="#222" stroke-width="1.3"/></svg>
<svg class="a" style="left:282px;top:709px" width="16" height="16" viewBox="0 0 16 16"><rect x="4" y="1" width="8" height="5" fill="#fff" stroke="#888"/><rect x="1" y="5" width="14" height="7" fill="#A8ACB4" stroke="#777"/><rect x="4" y="10" width="8" height="5" fill="#fff" stroke="#888"/><rect x="7" y="8" width="3" height="2" fill="#3A7AD8"/></svg>
<svg class="a" style="left:282px;top:733px" width="16" height="16" viewBox="0 0 16 16"><path d="M1 7l7-5 7 5v8H1z" fill="#F8D060"/><rect x="1.5" y="6.5" width="13" height="9" fill="#E0ECFA" stroke="#7A8AB0"/><path d="M1 7l7 5 7-5" stroke="#7A8AB0" fill="none"/></svg>
<div class="a" style="left:305px;top:623px;width:1265px;height:145px;background:#fff;border:1px solid #828790"></div>
<div class="a" style="left:307px;top:730px;width:1243px;height:16px;background:linear-gradient(#F4F4F4,#E2E2E2);border:1px solid #C8C8C8;border-radius:2px"></div>
<svg class="a" style="left:314px;top:627px" width="12" height="12" viewBox="0 0 12 12"><circle cx="6" cy="6" r="4.8" fill="#3A80E0"/><circle cx="6" cy="6" r="4.8" fill="none" stroke="#2058B8" stroke-width=".7"/><rect x="5.2" y="5.2" width="1.6" height="3.8" fill="#fff"/><rect x="5.2" y="3" width="1.6" height="1.4" fill="#fff"/></svg>
<div class="t" style="left:337px;top:626px;font-family:'Liberation Mono',monospace;font-size:11px;color:#1A2A6A">Download Complete</div>
<svg class="a" style="left:314px;top:645px" width="12" height="12" viewBox="0 0 12 12"><circle cx="6" cy="6" r="4.8" fill="#3A80E0"/><circle cx="6" cy="6" r="4.8" fill="none" stroke="#2058B8" stroke-width=".7"/><rect x="5.2" y="5.2" width="1.6" height="3.8" fill="#fff"/><rect x="5.2" y="3" width="1.6" height="1.4" fill="#fff"/></svg>
<div class="t" style="left:337px;top:644px;font-family:'Liberation Mono',monospace;font-size:11px;color:#1A2A6A">Loading display blocks : BB_STRIP</div>
<svg class="a" style="left:314px;top:662px" width="12" height="12" viewBox="0 0 12 12"><circle cx="6" cy="6" r="4.8" fill="#3A80E0"/><circle cx="6" cy="6" r="4.8" fill="none" stroke="#2058B8" stroke-width=".7"/><rect x="5.2" y="5.2" width="1.6" height="3.8" fill="#fff"/><rect x="5.2" y="3" width="1.6" height="1.4" fill="#fff"/></svg>
<div class="t" style="left:337px;top:661px;font-family:'Liberation Mono',monospace;font-size:11px;color:#1A2A6A">Created reference BLOCKS</div>
<svg class="a" style="left:314px;top:680px" width="12" height="12" viewBox="0 0 12 12"><circle cx="6" cy="6" r="4.8" fill="#3A80E0"/><circle cx="6" cy="6" r="4.8" fill="none" stroke="#2058B8" stroke-width=".7"/><rect x="5.2" y="5.2" width="1.6" height="3.8" fill="#fff"/><rect x="5.2" y="3" width="1.6" height="1.4" fill="#fff"/></svg>
<div class="t" style="left:337px;top:679px;font-family:'Liberation Mono',monospace;font-size:11px;color:#1A2A6A">Download Complete</div>
<svg class="a" style="left:314px;top:697px" width="12" height="12" viewBox="0 0 12 12"><circle cx="6" cy="6" r="4.8" fill="#3A80E0"/><circle cx="6" cy="6" r="4.8" fill="none" stroke="#2058B8" stroke-width=".7"/><rect x="5.2" y="5.2" width="1.6" height="3.8" fill="#fff"/><rect x="5.2" y="3" width="1.6" height="1.4" fill="#fff"/></svg>
<div class="t" style="left:337px;top:696px;font-family:'Liberation Mono',monospace;font-size:11px;color:#1A2A6A">Loading display blocks : BB_PRAC</div>
<svg class="a" style="left:314px;top:714px" width="12" height="12" viewBox="0 0 12 12"><circle cx="6" cy="6" r="4.8" fill="#3A80E0"/><circle cx="6" cy="6" r="4.8" fill="none" stroke="#2058B8" stroke-width=".7"/><rect x="5.2" y="5.2" width="1.6" height="3.8" fill="#fff"/><rect x="5.2" y="3" width="1.6" height="1.4" fill="#fff"/></svg>
<div class="t" style="left:337px;top:713px;font-family:'Liberation Mono',monospace;font-size:11px;color:#1A2A6A">Created reference BLOCKS</div>
<svg class="a" style="left:314px;top:732px" width="12" height="12" viewBox="0 0 12 12"><circle cx="6" cy="6" r="4.8" fill="#3A80E0"/><circle cx="6" cy="6" r="4.8" fill="none" stroke="#2058B8" stroke-width=".7"/><rect x="5.2" y="5.2" width="1.6" height="3.8" fill="#fff"/><rect x="5.2" y="3" width="1.6" height="1.4" fill="#fff"/></svg>
<div class="t" style="left:337px;top:731px;font-family:'Liberation Mono',monospace;font-size:11px;color:#1A2A6A">Download Complete</div>
<div class="a" style="left:1550px;top:624px;width:19px;height:125px;background:#F0F0F0"></div>
<div class="a" style="left:1551px;top:626px;width:17px;height:15px;border:1px solid #6E6E6E;border-radius:2px;background:linear-gradient(90deg,#FAFAFA,#E0E0E0 60%,#D2D2D2)"></div>
<svg class="a" style="left:1555px;top:631px" width="8" height="5" viewBox="0 0 8 5"><path d="M0 4h8L4 0z" fill="#333"/></svg>
<div class="a" style="left:1551px;top:722px;width:17px;height:9px;border:1px solid #6E6E6E;border-radius:2px;background:linear-gradient(90deg,#FAFAFA,#E0E0E0 60%,#D2D2D2)"></div>
<div class="a" style="left:1551px;top:733px;width:17px;height:15px;border:1px solid #6E6E6E;border-radius:2px;background:linear-gradient(90deg,#FAFAFA,#E0E0E0 60%,#D2D2D2)"></div>
<svg class="a" style="left:1555px;top:738px" width="8" height="5" viewBox="0 0 8 5"><path d="M0 0h8L4 4z" fill="#333"/></svg>
<div class="a" style="left:306px;top:749px;width:1244px;height:18px;background:#F0F0F0"></div>
<div class="a" style="left:308px;top:751px;width:17px;height:15px;border:1px solid #6E6E6E;border-radius:2px;background:linear-gradient(180deg,#FAFAFA,#E0E0E0 60%,#D2D2D2)"></div>
<svg class="a" style="left:312px;top:756px" width="8" height="8" viewBox="0 0 8 8"><path d="M4 0v8L0 4z" fill="#333"/></svg>
<div class="a" style="left:326px;top:751px;width:149px;height:15px;border:1px solid #6E6E6E;border-radius:2px;background:linear-gradient(180deg,#FAFAFA,#E0E0E0 60%,#D2D2D2)"></div>
<div class="a" style="left:1532px;top:751px;width:17px;height:15px;border:1px solid #6E6E6E;border-radius:2px;background:linear-gradient(180deg,#FAFAFA,#E0E0E0 60%,#D2D2D2)"></div>
<svg class="a" style="left:1536px;top:756px" width="8" height="8" viewBox="0 0 8 8"><path d="M0 0v8l4-4z" fill="#333"/></svg>
<div class="a" style="left:354px;top:770px;width:1216px;height:1px;background:#2B57A0"></div>
<div class="a" style="left:278px;top:770px;width:76px;height:22px;background:linear-gradient(#EAF2FD,#D9E7FA);border-radius:0 0 3px 3px;border:1px solid #B8CEEE;border-top:none"></div>
<svg class="a" style="left:281px;top:773px" width="17" height="16" viewBox="0 0 17 16"><rect x="1.5" y="3.5" width="10" height="11" fill="#F4F7FC" stroke="#7E8AA0"/><path d="M5 12l8-9 2 2-8 9z" fill="#F0C040" stroke="#806020" stroke-width=".6"/><path d="M13 3l2 2 1-2-1-1z" fill="#D06050"/></svg>
<div class="t" style="left:300px;top:774px;color:#1E3F7E;letter-spacing:-0.3px">Feedback</div>
<svg class="a" style="left:364px;top:773px" width="16" height="16" viewBox="0 0 16 16"><path d="M9 1h6l-2 3 2 3h-5z" fill="#E8C040" stroke="#A08020" stroke-width=".6"/><circle cx="5" cy="10" r="3.5" fill="#E0F0FF" stroke="#6A8AB0"/><path d="M7 12l3 3" stroke="#C08020" stroke-width="2"/></svg>
<div class="t" style="left:382px;top:774px;color:#1E3F7E;letter-spacing:-0.3px">Tracer</div>
<svg class="a" style="left:430px;top:773px" width="16" height="16" viewBox="0 0 16 16"><rect x="1.5" y="3.5" width="12" height="11" fill="#F0C040" stroke="#A08020"/><rect x="4" y="1" width="7" height="4" fill="#fff" stroke="#888"/></svg>
<div class="t" style="left:449px;top:774px;color:#1E3F7E;letter-spacing:-0.3px">Snapshot</div>
<div class="a" style="left:1570px;top:599px;width:1px;height:172px;background:#2B57A0"></div>
<div class="a" style="left:1572px;top:79px;width:27px;height:473px;background:linear-gradient(90deg,#E3EEFD,#C4DAF7);border-right:1px solid #9BBBE5;border-radius:3px 3px 0 0"></div>
<div class="a" style="left:1572px;top:552px;width:27px;height:14px;background:linear-gradient(90deg,#B9D2F3,#97B9E8)"></div>
<svg class="a" style="left:1588px;top:555px" width="8" height="8" viewBox="0 0 8 8"><path d="M0 0v8M2 0l4 4-4 4z" fill="#111" stroke="#111" stroke-width=".5"/></svg>
<svg class="a" style="left:1577px;top:82px" width="16" height="3" viewBox="0 0 16 3"><path d="M1 1h2M4 1h2M7 1h2M10 1h2M13 1h2" stroke="#4A78C0" stroke-width="2"/></svg>
<div class="act" style="left:1574px;top:191px;width:24px;height:22px"></div>
<svg class="a" style="left:1578px;top:92px" width="16" height="16" viewBox="0 0 16 16"><rect x="1.5" y="3.5" width="13" height="10" fill="#EEF2FA" stroke="#3A4A68"/><rect x="1.5" y="3.5" width="13" height="2" fill="#3A6AC8"/><path d="M1 1l4 4M5 1L1 5M3 0v6M0 3h6" stroke="#F2C020" stroke-width="1.2"/></svg>
<svg class="a" style="left:1578px;top:118px" width="16" height="16" viewBox="0 0 16 16"><rect x="1.5" y="3.5" width="13" height="10" fill="#EEF2FA" stroke="#3A4A68"/><rect x="1.5" y="3.5" width="13" height="2" fill="#3A6AC8"/><path d="M9 9l5 5M14 9l-5 5" stroke="#E03030" stroke-width="1.8"/></svg>
<svg class="a" style="left:1578px;top:140px" width="16" height="16" viewBox="0 0 16 16"><rect x="1.5" y="3.5" width="13" height="10" fill="#EEF2FA" stroke="#3A4A68"/><rect x="1.5" y="3.5" width="13" height="2" fill="#3A6AC8"/><path d="M3 6l5-3 6 2-3 3z" fill="#E8B840" stroke="#A07010"/></svg>
<svg class="a" style="left:1578px;top:169px" width="16" height="16" viewBox="0 0 16 16"><rect x="1.5" y="3.5" width="13" height="10" fill="#EEF2FA" stroke="#3A4A68"/><rect x="1.5" y="3.5" width="13" height="2" fill="#3A6AC8"/><path d="M7 15l3-8 3 8M8 12h4" stroke="#555" fill="none"/></svg>
<svg class="a" style="left:1578px;top:194px" width="16" height="16" viewBox="0 0 16 16"><rect x="1.5" y="3.5" width="13" height="10" fill="#EEF2FA" stroke="#3A4A68"/><rect x="1.5" y="3.5" width="13" height="2" fill="#3A6AC8"/><path d="M5 14l4-5 4 2" stroke="#2A6CC8" stroke-width="1.5" fill="none"/></svg>
<svg class="a" style="left:1578px;top:218px" width="16" height="16" viewBox="0 0 16 16"><rect x="1.5" y="3.5" width="13" height="10" fill="#EEF2FA" stroke="#3A4A68"/><rect x="1.5" y="3.5" width="13" height="2" fill="#3A6AC8"/><rect x="7" y="10" width="8" height="5" fill="#fff" stroke="#555"/><path d="M8 12h6" stroke="#555" stroke-dasharray="1 1" stroke-dashoffset="0.5"/></svg>
<svg class="a" style="left:1578px;top:242px" width="16" height="16" viewBox="0 0 16 16"><rect x="1.5" y="3.5" width="13" height="10" fill="#EEF2FA" stroke="#3A4A68"/><rect x="1.5" y="3.5" width="13" height="2" fill="#3A6AC8"/><path d="M7 9h8M7 11h8M7 13h8M9 8v7M11 8v7M13 8v7" stroke="#3A5AA8"/></svg>
<svg class="a" style="left:1578px;top:269px" width="16" height="16" viewBox="0 0 16 16"><rect x="1.5" y="3.5" width="13" height="10" fill="#EEF2FA" stroke="#3A4A68"/><rect x="1.5" y="3.5" width="13" height="2" fill="#3A6AC8"/><path d="M3 9h10" stroke="#333" stroke-dasharray="1 1" stroke-dashoffset="0.5"/></svg>
<svg class="a" style="left:1578px;top:293px" width="16" height="16" viewBox="0 0 16 16"><rect x="1.5" y="3.5" width="13" height="10" fill="#EEF2FA" stroke="#3A4A68"/><rect x="1.5" y="3.5" width="13" height="2" fill="#3A6AC8"/><path d="M8 4v10" stroke="#333" stroke-dasharray="1 1" stroke-dashoffset="0.5"/></svg>
<svg class="a" style="left:1578px;top:327px" width="16" height="16" viewBox="0 0 16 16"><rect x="1.5" y="1.5" width="9" height="7" fill="#3A6AC8" stroke="#3A4A68"/><rect x="5.5" y="7.5" width="10" height="8" fill="#EEF2FA" stroke="#3A4A68"/><path d="M12 1l3 3M15 1v3h-3" stroke="#333" fill="none"/></svg>
<svg class="a" style="left:1578px;top:348px" width="16" height="16" viewBox="0 0 16 16"><rect x="1.5" y="3.5" width="13" height="10" fill="#EEF2FA" stroke="#3A4A68"/><rect x="1.5" y="3.5" width="13" height="2" fill="#3A6AC8"/><rect x="9" y="9" width="6" height="6" fill="#E0B030"/><path d="M10.5 9V7.5a1.5 1.5 0 013 0V9" stroke="#9A7A20" fill="none"/></svg>
<svg class="a" style="left:1578px;top:373px" width="16" height="16" viewBox="0 0 16 16"><rect x="1.5" y="2.5" width="10" height="5" fill="#fff" stroke="#555"/><path d="M3 5h7" stroke="#555" stroke-dasharray="1 1" stroke-dashoffset="0.5"/><rect x="9" y="9" width="6" height="6" fill="#E0B030"/><path d="M10.5 9V7.5a1.5 1.5 0 013 0V9" stroke="#9A7A20" fill="none"/></svg>
<svg class="a" style="left:1578px;top:400px" width="16" height="16" viewBox="0 0 16 16"><rect x="1.5" y="2.5" width="12" height="10" fill="#5AA0E0" stroke="#3A4A68"/><path d="M2 11l4-4 3 3 5-3v5H2z" fill="#4A9A50"/><circle cx="11" cy="11" r="4" fill="none" stroke="#2A5AA8" stroke-width="1.2"/></svg>
<svg class="a" style="left:1578px;top:423px" width="16" height="16" viewBox="0 0 16 16"><rect x="1.5" y="2.5" width="13" height="11" fill="#C8C8C8" stroke="#888"/><path d="M2 12l4-4 3 3 5-3v5H2z" fill="#A0A0A0"/></svg>
<svg class="a" style="left:1578px;top:454px" width="16" height="16" viewBox="0 0 16 16"><rect x="1" y="1" width="7" height="7" fill="#8A8A8A"/><rect x="6" y="5" width="7" height="7" fill="#E8B030"/><rect x="9" y="9" width="6" height="6" fill="#8A8A8A"/></svg>
<svg class="a" style="left:1578px;top:476px" width="16" height="16" viewBox="0 0 16 16"><rect x="1" y="1" width="9" height="9" fill="#F0C040" stroke="#B08010"/><rect x="7" y="7" width="8" height="8" fill="#9A9A9A"/></svg>
<svg class="a" style="left:1578px;top:500px" width="16" height="16" viewBox="0 0 16 16"><rect x="7" y="7" width="8" height="8" fill="#5A5A5A"/><rect x="1" y="1" width="10" height="10" fill="#F0C040" stroke="#B08010"/></svg>
<svg class="a" style="left:1578px;top:524px" width="16" height="16" viewBox="0 0 16 16"><rect x="1" y="1" width="8" height="8" fill="#9A9A9A"/><rect x="4" y="4" width="8" height="8" fill="#F0C040" stroke="#B08010"/><rect x="8" y="8" width="7" height="7" fill="#7A7A7A" fill-opacity=".7"/></svg>
<div class="hsep" style="left:1577px;top:163px;width:18px"></div>
<div class="hsep" style="left:1577px;top:263px;width:18px"></div>
<div class="hsep" style="left:1577px;top:315px;width:18px"></div>
<div class="hsep" style="left:1577px;top:393px;width:18px"></div>
<div class="hsep" style="left:1577px;top:446px;width:18px"></div>
<div class="tb" style="left:0;top:794px;width:1290px;height:27px"></div>
<div class="dd" style="left:362px;top:794px;width:11px;height:27px"></div>
<svg class="a" style="left:364px;top:811px" width="6" height="6" viewBox="0 0 6 6"><path d="M0 0.5h6" stroke="#000"/><path d="M0 2h6l-3 3z" fill="#000"/><path d="M0 3h6" stroke="#fff" stroke-opacity=".0"/></svg>
<div class="dd" style="left:737px;top:794px;width:11px;height:27px"></div>
<svg class="a" style="left:739px;top:811px" width="6" height="6" viewBox="0 0 6 6"><path d="M0 0.5h6" stroke="#000"/><path d="M0 2h6l-3 3z" fill="#000"/><path d="M0 3h6" stroke="#fff" stroke-opacity=".0"/></svg>
<div class="dd" style="left:1290px;top:794px;width:11px;height:27px"></div>
<svg class="a" style="left:1292px;top:811px" width="6" height="6" viewBox="0 0 6 6"><path d="M0 0.5h6" stroke="#000"/><path d="M0 2h6l-3 3z" fill="#000"/><path d="M0 3h6" stroke="#fff" stroke-opacity=".0"/></svg>
<div class="tb" style="left:1302px;top:794px;width:258px;height:27px;border-radius:3px 0 0 3px"></div>
<div class="a" style="left:373px;top:794px;width:3px;height:27px;background:#BFDBFF"></div>
<div class="a" style="left:748px;top:794px;width:2px;height:27px;background:#BFDBFF"></div>
<div class="a" style="left:1301px;top:794px;width:1px;height:27px;background:#BFDBFF"></div>
<svg class="a" style="left:3px;top:799px" width="3" height="16" viewBox="0 0 3 16"><rect x="1" y="1" width="2" height="2" fill="#fff"/><rect x="0" y="0" width="2" height="2" fill="#4A78C0"/><rect x="1" y="5" width="2" height="2" fill="#fff"/><rect x="0" y="4" width="2" height="2" fill="#4A78C0"/><rect x="1" y="9" width="2" height="2" fill="#fff"/><rect x="0" y="8" width="2" height="2" fill="#4A78C0"/><rect x="1" y="13" width="2" height="2" fill="#fff"/><rect x="0" y="12" width="2" height="2" fill="#4A78C0"/></svg>
<svg class="a" style="left:378px;top:799px" width="3" height="16" viewBox="0 0 3 16"><rect x="1" y="1" width="2" height="2" fill="#fff"/><rect x="0" y="0" width="2" height="2" fill="#4A78C0"/><rect x="1" y="5" width="2" height="2" fill="#fff"/><rect x="0" y="4" width="2" height="2" fill="#4A78C0"/><rect x="1" y="9" width="2" height="2" fill="#fff"/><rect x="0" y="8" width="2" height="2" fill="#4A78C0"/><rect x="1" y="13" width="2" height="2" fill="#fff"/><rect x="0" y="12" width="2" height="2" fill="#4A78C0"/></svg>
<svg class="a" style="left:751px;top:799px" width="3" height="16" viewBox="0 0 3 16"><rect x="1" y="1" width="2" height="2" fill="#fff"/><rect x="0" y="0" width="2" height="2" fill="#4A78C0"/><rect x="1" y="5" width="2" height="2" fill="#fff"/><rect x="0" y="4" width="2" height="2" fill="#4A78C0"/><rect x="1" y="9" width="2" height="2" fill="#fff"/><rect x="0" y="8" width="2" height="2" fill="#4A78C0"/><rect x="1" y="13" width="2" height="2" fill="#fff"/><rect x="0" y="12" width="2" height="2" fill="#4A78C0"/></svg>
<svg class="a" style="left:1305px;top:799px" width="3" height="16" viewBox="0 0 3 16"><rect x="1" y="1" width="2" height="2" fill="#fff"/><rect x="0" y="0" width="2" height="2" fill="#4A78C0"/><rect x="1" y="5" width="2" height="2" fill="#fff"/><rect x="0" y="4" width="2" height="2" fill="#4A78C0"/><rect x="1" y="9" width="2" height="2" fill="#fff"/><rect x="0" y="8" width="2" height="2" fill="#4A78C0"/><rect x="1" y="13" width="2" height="2" fill="#fff"/><rect x="0" y="12" width="2" height="2" fill="#4A78C0"/></svg>
<div class="t" style="left:10px;top:801px;color:#111;letter-spacing:-0.3px">Status</div>
<div class="a" style="left:47px;top:797px;width:312px;height:21px;background:#fff;border:1px solid #A5BFE3;border-right:none"></div>
<div class="t" style="left:52px;top:801px;color:#2020E0;letter-spacing:-0.3px">Ready...</div>
<div class="a" style="left:345px;top:798px;width:14px;height:19px;background:linear-gradient(#D6E6FA,#A9C8F0)"></div>
<svg class="a" style="left:347px;top:804px" width="9" height="7" viewBox="0 0 9 7"><path d="M0 0h9L4.5 7z" fill="#000"/></svg>
<div class="t" style="left:384px;top:801px;color:#111;letter-spacing:-0.3px">Stowed</div>
<div class="a" style="left:428px;top:797px;width:311px;height:21px;background:#fff;border:1px solid #A5BFE3;border-right:none"></div>
<div class="a" style="left:724px;top:798px;width:15px;height:19px;background:linear-gradient(#D6E6FA,#A9C8F0)"></div>
<svg class="a" style="left:727px;top:804px" width="9" height="7" viewBox="0 0 9 7"><path d="M0 0h9L4.5 7z" fill="#000"/></svg>
<div class="t" style="left:758px;top:801px;color:#111;letter-spacing:-0.3px">Modules</div>
<div class="a" style="left:809px;top:797px;width:300px;height:21px;background:#fff;border:1px solid #A5BFE3"></div>
<svg class="a" style="left:813px;top:799px" width="17" height="17" viewBox="0 0 17 17"><circle cx="8.5" cy="8.5" r="8" fill="#22A030"/><circle cx="8.5" cy="7" r="6" fill="#3EC04A"/><path d="M4 9l3 3 6-6" stroke="#fff" stroke-width="2.2" fill="none"/></svg>
<div class="t" style="left:836px;top:801px;color:#111;letter-spacing:-0.3px">Unload a design file in DXF format</div>
<div class="a" style="left:1092px;top:798px;width:16px;height:19px;background:linear-gradient(#D6E6FA,#A9C8F0)"></div>
<svg class="a" style="left:1096px;top:804px" width="9" height="7" viewBox="0 0 9 7"><path d="M0 0h9L4.5 7z" fill="#000"/></svg>
<svg class="a" style="left:1112px;top:799px" width="16" height="16" viewBox="0 0 16 16"><circle cx="8" cy="8" r="6.5" fill="#A8C8F0" stroke="#5A80C0"/><path d="M5 8a3 3 0 106-1" stroke="#2A5AB0" stroke-width="1.4" fill="none"/></svg>
<svg class="a" style="left:1136px;top:799px" width="16" height="16" viewBox="0 0 16 16"><circle cx="8" cy="8" r="6.5" fill="#A8C8F0" stroke="#5A80C0"/><path d="M6.5 5v6M9.5 5v6" stroke="#2A5AB0" stroke-width="1.6"/></svg>
<svg class="a" style="left:1160px;top:799px" width="16" height="16" viewBox="0 0 16 16"><circle cx="8" cy="8" r="6.5" fill="#A8C8F0" stroke="#5A80C0"/><path d="M6 5v6l5-3z" fill="#2A5AB0"/></svg>
<svg class="a" style="left:1184px;top:799px" width="16" height="16" viewBox="0 0 16 16"><circle cx="8" cy="8" r="6.5" fill="#A8C8F0" stroke="#5A80C0"/><rect x="5.5" y="5.5" width="5" height="5" fill="#2A5AB0"/></svg>
<svg class="a" style="left:1213px;top:799px" width="16" height="16" viewBox="0 0 16 16"><circle cx="8" cy="8" r="6.5" fill="#E83030" stroke="#A01010"/><path d="M5.5 5.5l5 5M10.5 5.5l-5 5" stroke="#fff" stroke-width="1.8"/></svg>
<svg class="a" style="left:1243px;top:799px" width="16" height="16" viewBox="0 0 16 16"><rect x="1" y="1" width="14" height="14" fill="#5856B0" stroke="#2A2A80"/><rect x="3" y="1" width="10" height="7" fill="#E8ECF4"/><rect x="5" y="10" width="5" height="4" fill="#222"/></svg>
<svg class="a" style="left:1268px;top:799px" width="16" height="16" viewBox="0 0 16 16"><rect x="1.5" y="1.5" width="13" height="13" fill="#F4F4F4" stroke="#555"/><path d="M3 4h10M3 7h10M3 10h10M3 13h10M6 3v11" stroke="#4A6A50"/></svg>
<div class="sep" style="left:1206px;top:799px;width:2px;height:17px"></div>
<div class="sep" style="left:1236px;top:799px;width:2px;height:17px"></div>
<svg class="a" style="left:1314px;top:799px" width="16" height="16" viewBox="0 0 16 16"><rect x="2" y="5" width="9" height="9" fill="#F0F4FA"/><polygon points="2,5 5,2 14,2 11,5" fill="#3A64A8"/><path d="M2.5 5.5h9v9h-9zM5.5 2.5h9v9h-9zM2.5 5.5l3-3M11.5 5.5l3-3M11.5 14.5l3-3M2.5 14.5l3-3" fill="none" stroke="#3A5A90" stroke-width="1"/></svg>
<svg class="a" style="left:1339px;top:799px" width="16" height="16" viewBox="0 0 16 16"><rect x="2" y="5" width="9" height="9" fill="#F0F4FA"/><polygon points="2,14 5,11 14,11 11,14" fill="#3A64A8"/><path d="M2.5 5.5h9v9h-9zM5.5 2.5h9v9h-9zM2.5 5.5l3-3M11.5 5.5l3-3M11.5 14.5l3-3M2.5 14.5l3-3" fill="none" stroke="#3A5A90" stroke-width="1"/></svg>
<svg class="a" style="left:1363px;top:799px" width="16" height="16" viewBox="0 0 16 16"><rect x="2" y="5" width="9" height="9" fill="#F0F4FA"/><polygon points="2,5 5,2 5,11 2,14" fill="#3A64A8"/><path d="M2.5 5.5h9v9h-9zM5.5 2.5h9v9h-9zM2.5 5.5l3-3M11.5 5.5l3-3M11.5 14.5l3-3M2.5 14.5l3-3" fill="none" stroke="#3A5A90" stroke-width="1"/></svg>
<svg class="a" style="left:1387px;top:799px" width="16" height="16" viewBox="0 0 16 16"><rect x="2" y="5" width="9" height="9" fill="#F0F4FA"/><polygon points="11,5 14,2 14,11 11,14" fill="#3A64A8"/><path d="M2.5 5.5h9v9h-9zM5.5 2.5h9v9h-9zM2.5 5.5l3-3M11.5 5.5l3-3M11.5 14.5l3-3M2.5 14.5l3-3" fill="none" stroke="#3A5A90" stroke-width="1"/></svg>
<svg class="a" style="left:1411px;top:799px" width="16" height="16" viewBox="0 0 16 16"><rect x="2" y="5" width="9" height="9" fill="#F0F4FA"/><polygon points="2,5 11,5 11,14 2,14" fill="#3A64A8"/><path d="M2.5 5.5h9v9h-9zM5.5 2.5h9v9h-9zM2.5 5.5l3-3M11.5 5.5l3-3M11.5 14.5l3-3M2.5 14.5l3-3" fill="none" stroke="#3A5A90" stroke-width="1"/></svg>
<div class="sep" style="left:1433px;top:799px;width:2px;height:17px"></div>
<svg class="a" style="left:1441px;top:799px" width="16" height="16" viewBox="0 0 16 16"><rect x="2" y="5" width="9" height="9" fill="#F0F4FA"/><polygon points="5,2 14,2 14,11 5,11" fill="#3A64A8"/><path d="M2.5 5.5h9v9h-9zM5.5 2.5h9v9h-9zM2.5 5.5l3-3M11.5 5.5l3-3M11.5 14.5l3-3M2.5 14.5l3-3" fill="none" stroke="#3A5A90" stroke-width="1"/></svg>
<svg class="a" style="left:1465px;top:799px" width="16" height="16" viewBox="0 0 16 16"><polygon points="8,1 14,4.5 14,11.5 8,15 2,11.5 2,4.5" fill="#F0F4FA" stroke="#3A5A90"/><polygon points="8,1 14,4.5 14,11.5 8,8" fill="#3A64A8"/><path d="M8 8v7M8 8l6-3.5M8 8L2 4.5" stroke="#3A5A90" fill="none"/></svg>
<svg class="a" style="left:1489px;top:799px" width="16" height="16" viewBox="0 0 16 16"><polygon points="8,1 14,4.5 14,11.5 8,15 2,11.5 2,4.5" fill="#F0F4FA" stroke="#3A5A90"/><polygon points="8,1 2,4.5 2,11.5 8,8" fill="#3A64A8"/><path d="M8 8v7M8 8l6-3.5M8 8L2 4.5" stroke="#3A5A90" fill="none"/></svg>
<svg class="a" style="left:1513px;top:799px" width="16" height="16" viewBox="0 0 16 16"><polygon points="8,1 14,4.5 14,11.5 8,15 2,11.5 2,4.5" fill="#F0F4FA" stroke="#3A5A90"/><polygon points="8,8 14,4.5 14,11.5 8,15" fill="#3A64A8"/><path d="M8 8v7M8 8l6-3.5M8 8L2 4.5" stroke="#3A5A90" fill="none"/></svg>
<svg class="a" style="left:1537px;top:799px" width="16" height="16" viewBox="0 0 16 16"><polygon points="8,1 14,4.5 14,11.5 8,15 2,11.5 2,4.5" fill="#F0F4FA" stroke="#3A5A90"/><polygon points="8,8 2,4.5 2,11.5 8,15" fill="#3A64A8"/><path d="M8 8v7M8 8l6-3.5M8 8L2 4.5" stroke="#3A5A90" fill="none"/></svg>
<div class="tb" style="left:1302px;top:794px;width:0px;height:0px"></div>
<div class="dd" style="left:1560px;top:794px;width:11px;height:27px"></div>
<svg class="a" style="left:1562px;top:811px" width="6" height="6" viewBox="0 0 6 6"><path d="M0 0.5h6" stroke="#000"/><path d="M0 2h6l-3 3z" fill="#000"/><path d="M0 3h6" stroke="#fff" stroke-opacity=".0"/></svg>
<div class="a" style="left:0;top:821px;width:1601px;height:24px;background:linear-gradient(#D6E6FA,#C3DAF7)"></div>
<div class="t" style="left:8px;top:827px;color:#1E3F7E;letter-spacing:0.2px">481739.019, 9842468.105, 20.000</div>
<div class="sep" style="left:202px;top:825px;width:2px;height:16px"></div>
<div class="t" style="left:217px;top:827px;color:#1E3F7E;letter-spacing:-0.2px">Viewport:</div>
<div class="a" style="left:269px;top:823px;width:124px;height:20px;background:#fff;border:1px solid #C5D8F1"></div>
<div class="a" style="left:378px;top:824px;width:14px;height:18px;background:linear-gradient(#D6E6FA,#A9C8F0)"></div>
<svg class="a" style="left:380px;top:830px" width="9" height="7" viewBox="0 0 9 7"><path d="M0 0h9L4.5 7z" fill="#000"/></svg>
<div class="t" style="left:272px;top:827px;color:#000;letter-spacing:-0.2px">MAIN</div>
<div class="sep" style="left:398px;top:825px;width:2px;height:16px"></div>
<div class="t" style="left:411px;top:827px;color:#1E3F7E;letter-spacing:-0.2px">Scale 1 :</div>
<div class="a" style="left:456px;top:823px;width:100px;height:20px;background:#fff;border:1px solid #C5D8F1"></div>
<div class="a" style="left:541px;top:824px;width:14px;height:18px;background:linear-gradient(#D6E6FA,#A9C8F0)"></div>
<svg class="a" style="left:543px;top:830px" width="9" height="7" viewBox="0 0 9 7"><path d="M0 0h9L4.5 7z" fill="#000"/></svg>
<div class="t" style="left:459px;top:827px;color:#000;letter-spacing:-0.2px">27330</div>
<div class="sep" style="left:561px;top:825px;width:2px;height:16px"></div>
<div class="t" style="left:574px;top:827px;color:#1E3F7E;letter-spacing:-0.2px">Active Z:</div>
<div class="a" style="left:622px;top:823px;width:100px;height:20px;background:#fff;border:1px solid #C5D8F1"></div>
<div class="a" style="left:707px;top:824px;width:14px;height:18px;background:linear-gradient(#D6E6FA,#A9C8F0)"></div>
<svg class="a" style="left:709px;top:830px" width="9" height="7" viewBox="0 0 9 7"><path d="M0 0h9L4.5 7z" fill="#000"/></svg>
<div class="t" style="left:625px;top:827px;color:#000;letter-spacing:-0.2px">0.000</div>
<div class="sep" style="left:726px;top:825px;width:2px;height:16px"></div>
<div class="t" style="left:740px;top:827px;color:#1E3F7E;letter-spacing:-0.2px">Selected: 0</div>
</body></html>
